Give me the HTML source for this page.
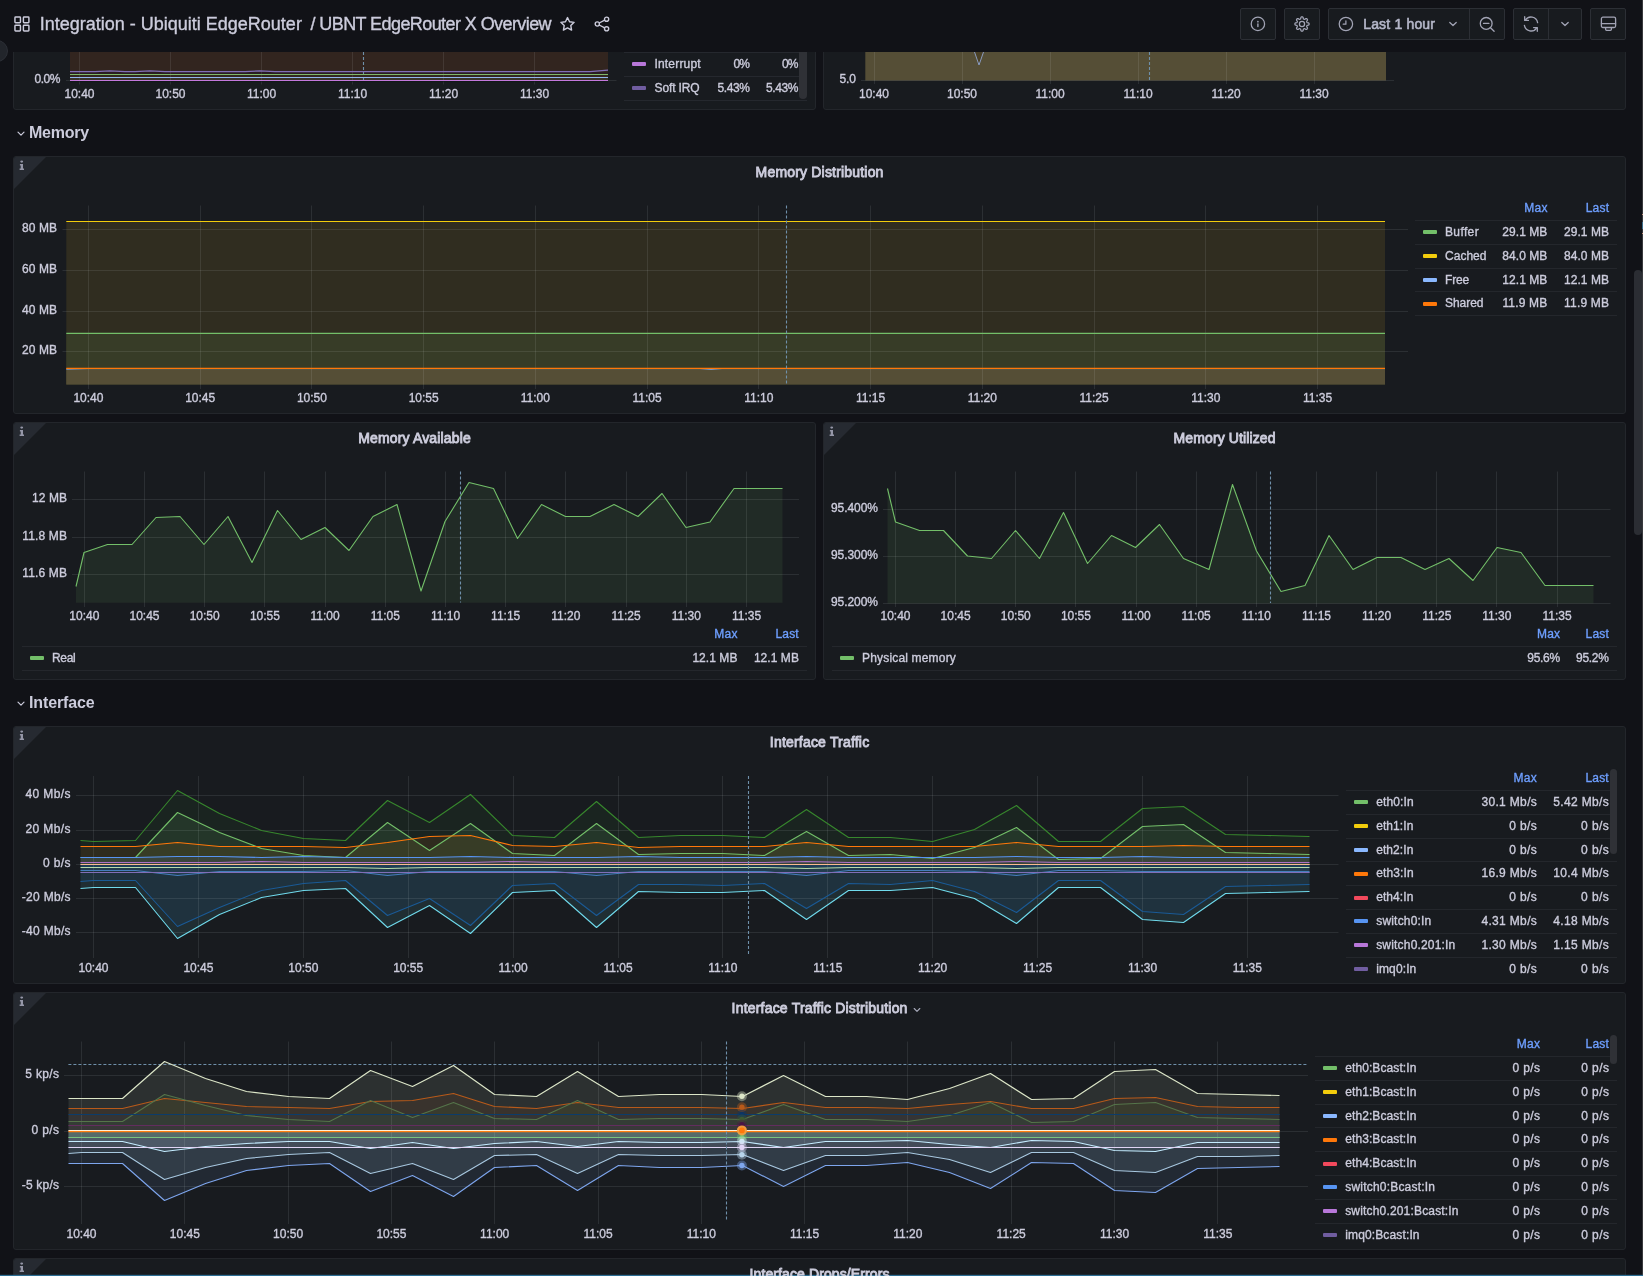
<!DOCTYPE html>
<html><head><meta charset="utf-8"><title>UBNT EdgeRouter X Overview</title>
<style>
html,body{margin:0;padding:0}
body{width:1643px;height:1276px;overflow:hidden;background:#111217;position:relative;font-family:'Liberation Sans',sans-serif;color:#ccccdc;-webkit-text-stroke:0.35px}
svg{position:absolute;overflow:visible}
</style></head><body>
<div style="position:absolute;left:13px;top:20px;width:801px;height:88px;background:#181b1f;border:1px solid #23262b;border-radius:3px;overflow:hidden">
</div>
<div style="position:absolute;left:823px;top:20px;width:801px;height:88px;background:#181b1f;border:1px solid #23262b;border-radius:3px;overflow:hidden">
</div>
<svg style="left:13px;top:52px" width="803" height="58" viewBox="13 52 803 58">
<rect x="70" y="52" width="538" height="29" fill="#32251f"/>
<rect x="70" y="72" width="538" height="2" fill="#2a1d20"/>
<rect x="70" y="75" width="538" height="2" fill="#33281f"/>
<rect x="70" y="78" width="538" height="2" fill="#3a3428"/>
<line x1="79.5" y1="52" x2="79.5" y2="84.5" stroke="rgba(240,250,255,0.09)" stroke-width="1"/>
<line x1="170.5" y1="52" x2="170.5" y2="84.5" stroke="rgba(240,250,255,0.09)" stroke-width="1"/>
<line x1="261.5" y1="52" x2="261.5" y2="84.5" stroke="rgba(240,250,255,0.09)" stroke-width="1"/>
<line x1="352.5" y1="52" x2="352.5" y2="84.5" stroke="rgba(240,250,255,0.09)" stroke-width="1"/>
<line x1="443.5" y1="52" x2="443.5" y2="84.5" stroke="rgba(240,250,255,0.09)" stroke-width="1"/>
<line x1="534.5" y1="52" x2="534.5" y2="84.5" stroke="rgba(240,250,255,0.09)" stroke-width="1"/>
<line x1="66" y1="80.5" x2="70" y2="80.5" stroke="rgba(240,250,255,0.09)" stroke-width="1"/>
<line x1="608" y1="80.5" x2="616.5" y2="80.5" stroke="rgba(240,250,255,0.09)" stroke-width="1"/>
<line x1="363.5" y1="52" x2="363.5" y2="80" stroke="#6f90aa" stroke-width="1.1" stroke-dasharray="3 2"/>
<polyline points="70,71.5 95,71.500 110,71 125,71.500 135,71.500 150,71 165,71.500 245,71.500 260,71 275,71.500 590,71.500 608,70.200" fill="none" stroke="#806eb7" stroke-width="1.25"/>
<line x1="70" y1="74.5" x2="608" y2="74.5" stroke="#7eb86a" stroke-width="1.15"/>
<line x1="70" y1="77.5" x2="608" y2="77.5" stroke="#92b4ee" stroke-width="1.1"/>
<line x1="70" y1="80.5" x2="608" y2="80.5" stroke="#c378dc" stroke-width="1.15"/>
<line x1="70" y1="81.6" x2="608" y2="81.6" stroke="#0e1515" stroke-width="0.7"/>
</svg>
<div style="position:absolute;left:624px;top:52px;width:183px;height:1px;background:#25282e"></div>
<div style="position:absolute;left:624px;top:76px;width:183px;height:1px;background:#25282e"></div>
<div style="position:absolute;left:624px;top:100px;width:183px;height:1px;background:#25282e"></div>
<div style="position:absolute;left:632px;top:62px;width:14px;height:4px;background:#b877d9;border-radius:1px"></div>
<div style="position:absolute;left:632px;top:86px;width:14px;height:4px;background:#705da0;border-radius:1px"></div>
<div style="position:absolute;left:799px;top:52px;width:7.5px;height:46.5px;background:#2f3136;border-radius:0 0 4px 4px"></div>
<svg style="left:823px;top:52px" width="803" height="58" viewBox="823 52 803 58">
<rect x="865.3" y="52" width="520.7" height="28.5" fill="#554e36"/>
<polygon points="974.5,52 979,65 983.5,52" fill="#4a4026"/>
<line x1="874.5" y1="52" x2="874.5" y2="84" stroke="rgba(240,250,255,0.09)" stroke-width="1"/>
<line x1="962.5" y1="52" x2="962.5" y2="84" stroke="rgba(240,250,255,0.09)" stroke-width="1"/>
<line x1="1050.5" y1="52" x2="1050.5" y2="84" stroke="rgba(240,250,255,0.09)" stroke-width="1"/>
<line x1="1138.5" y1="52" x2="1138.5" y2="84" stroke="rgba(240,250,255,0.09)" stroke-width="1"/>
<line x1="1226.5" y1="52" x2="1226.5" y2="84" stroke="rgba(240,250,255,0.09)" stroke-width="1"/>
<line x1="1314.5" y1="52" x2="1314.5" y2="84" stroke="rgba(240,250,255,0.09)" stroke-width="1"/>
<line x1="861" y1="80.5" x2="1394" y2="80.5" stroke="rgba(240,250,255,0.09)" stroke-width="1"/>
<line x1="1149.5" y1="52" x2="1149.5" y2="80" stroke="#6f90aa" stroke-width="1.1" stroke-dasharray="3 2"/>
<polyline points="974.5,52 979,65 983.5,52" fill="none" stroke="#8a9bc0" stroke-width="1"/>
</svg>
<div style="position:absolute;left:0px;top:0px;width:1643px;height:52px;background:#111217"></div>
<div style="position:absolute;left:-16px;top:40px;width:24px;height:22px;background:#22252b;border-radius:12px;box-sizing:border-box;border:1px solid #2c2f36"></div>
<svg style="left:14px;top:15.800px" width="16" height="16" viewBox="0 0 16 16" fill="none" stroke="#ccccdc" stroke-width="1.45"><rect x="0.950" y="0.950" width="5.500" height="5.700" rx="0.700"/><rect x="9.400" y="0.950" width="5.500" height="5.700" rx="0.700"/><rect x="0.950" y="9.250" width="5.500" height="5.700" rx="0.700"/><rect x="9.400" y="9.250" width="5.500" height="5.700" rx="0.700"/></svg>
<svg style="left:559.200px;top:16px" width="17" height="17" viewBox="0 0 24 24" fill="none" stroke="#ccccdc" stroke-width="2" stroke-linejoin="round"><polygon points="12.00,2.20 14.88,8.04 21.32,8.97 16.66,13.51 17.76,19.93 12.00,16.90 6.24,19.93 7.34,13.51 2.68,8.97 9.12,8.04"/></svg>
<svg style="left:594px;top:16px" width="16" height="16" viewBox="0 0 16 16" fill="none" stroke="#ccccdc" stroke-width="1.4"><circle cx="12.6" cy="3.2" r="2.1"/><circle cx="3.3" cy="8" r="2.1"/><circle cx="12.6" cy="12.8" r="2.1"/><path d="M5.2 7l5.5-2.900M5.200 9l5.500 2.900"/></svg>
<div style="position:absolute;left:1240px;top:8px;width:36px;height:32px;background:#181b1f;border:1px solid #2c2f35;border-radius:2px;box-sizing:border-box"></div>
<div style="position:absolute;left:1284px;top:8px;width:36px;height:32px;background:#181b1f;border:1px solid #2c2f35;border-radius:2px;box-sizing:border-box"></div>
<div style="position:absolute;left:1328px;top:8px;width:177px;height:32px;background:#181b1f;border:1px solid #2c2f35;border-radius:2px;box-sizing:border-box"></div>
<div style="position:absolute;left:1469px;top:8px;width:1px;height:32px;background:#2c2f35"></div>
<div style="position:absolute;left:1513px;top:8px;width:69px;height:32px;background:#181b1f;border:1px solid #2c2f35;border-radius:2px;box-sizing:border-box"></div>
<div style="position:absolute;left:1548px;top:8px;width:1px;height:32px;background:#2c2f35"></div>
<div style="position:absolute;left:1590px;top:8px;width:36px;height:32px;background:#181b1f;border:1px solid #2c2f35;border-radius:2px;box-sizing:border-box"></div>
<svg style="left:1250px;top:16px" width="16" height="16" viewBox="0 0 16 16" fill="none" stroke="#a2a4b5" stroke-width="1.25"><circle cx="7.900" cy="7.900" r="6.700"/><path d="M7.900 8v2.600" stroke-linecap="round" stroke-width="1.4"/><circle cx="7.900" cy="5.700" r="0.850" fill="#a2a4b5" stroke="none"/></svg>
<svg style="left:1294px;top:16px" width="16" height="16" viewBox="0 0 16 16" fill="none" stroke="#a2a4b5" stroke-width="1.25" stroke-linejoin="round"><circle cx="8" cy="8" r="2.600"/><polygon points="8.00,0.90 8.28,0.91 8.55,0.95 8.82,1.06 9.05,1.36 9.20,1.97 9.30,2.58 9.44,2.89 9.62,3.03 9.80,3.12 9.99,3.20 10.18,3.27 10.37,3.34 10.60,3.36 10.91,3.25 11.42,2.89 11.95,2.56 12.33,2.51 12.59,2.62 12.82,2.79 13.02,2.98 13.21,3.18 13.38,3.41 13.49,3.67 13.44,4.05 13.11,4.58 12.75,5.09 12.64,5.40 12.66,5.63 12.73,5.82 12.80,6.01 12.88,6.20 12.97,6.38 13.11,6.56 13.42,6.70 14.03,6.80 14.64,6.95 14.94,7.18 15.05,7.45 15.09,7.72 15.10,8.00 15.09,8.28 15.05,8.55 14.94,8.82 14.64,9.05 14.03,9.20 13.42,9.30 13.11,9.44 12.97,9.62 12.88,9.80 12.80,9.99 12.73,10.18 12.66,10.37 12.64,10.60 12.75,10.91 13.11,11.42 13.44,11.95 13.49,12.33 13.38,12.59 13.21,12.82 13.02,13.02 12.82,13.21 12.59,13.38 12.33,13.49 11.95,13.44 11.42,13.11 10.91,12.75 10.60,12.64 10.37,12.66 10.18,12.73 9.99,12.80 9.80,12.88 9.62,12.97 9.44,13.11 9.30,13.42 9.20,14.03 9.05,14.64 8.82,14.94 8.55,15.05 8.28,15.09 8.00,15.10 7.72,15.09 7.45,15.05 7.18,14.94 6.95,14.64 6.80,14.03 6.70,13.42 6.56,13.11 6.38,12.97 6.20,12.88 6.01,12.80 5.82,12.73 5.63,12.66 5.40,12.64 5.09,12.75 4.58,13.11 4.05,13.44 3.67,13.49 3.41,13.38 3.18,13.21 2.98,13.02 2.79,12.82 2.62,12.59 2.51,12.33 2.56,11.95 2.89,11.42 3.25,10.91 3.36,10.60 3.34,10.37 3.27,10.18 3.20,9.99 3.12,9.80 3.03,9.62 2.89,9.44 2.58,9.30 1.97,9.20 1.36,9.05 1.06,8.82 0.95,8.55 0.91,8.28 0.90,8.00 0.91,7.72 0.95,7.45 1.06,7.18 1.36,6.95 1.97,6.80 2.58,6.70 2.89,6.56 3.03,6.38 3.12,6.20 3.20,6.01 3.27,5.82 3.34,5.63 3.36,5.40 3.25,5.09 2.89,4.58 2.56,4.05 2.51,3.67 2.62,3.41 2.79,3.18 2.98,2.98 3.18,2.79 3.41,2.62 3.67,2.51 4.05,2.56 4.58,2.89 5.09,3.25 5.40,3.36 5.63,3.34 5.82,3.27 6.01,3.20 6.20,3.12 6.38,3.03 6.56,2.89 6.70,2.58 6.80,1.97 6.95,1.36 7.18,1.06 7.45,0.95 7.72,0.91"/></svg>
<svg style="left:1338px;top:16px" width="16" height="16" viewBox="0 0 16 16" fill="none" stroke="#a2a4b5" stroke-width="1.25"><circle cx="7.900" cy="8" r="6.700"/><path d="M7.900 4.800v3.400H5.200" stroke-linecap="round" stroke-linejoin="round"/></svg>
<svg style="left:1448px;top:20px" width="10" height="8" viewBox="0 0 10 8" fill="none" stroke="#a2a4b5" stroke-width="1.3"><path d="M1.800 2.500L5 5.500l3.200-3" stroke-linecap="round" stroke-linejoin="round"/></svg>
<svg style="left:1478px;top:15px" width="18" height="18" viewBox="0 0 18 18" fill="none" stroke="#a2a4b5" stroke-width="1.3"><circle cx="8.200" cy="8.400" r="5.900"/><path d="M5.500 8.400h5.400M12.500 12.700l3.600 3.600" stroke-linecap="round"/></svg>
<svg style="left:1522px;top:15px" width="18" height="18" viewBox="0 0 18 18" fill="none" stroke="#a2a4b5" stroke-width="1.3" stroke-linecap="round" stroke-linejoin="round"><path d="M15.600 7.600A6.700 6.700 0 0 0 3.300 5.200M2.400 10.400a6.700 6.700 0 0 0 12.300 2.400"/><path d="M2.700 1.700v3.700h3.700M15.300 16.300v-3.700h-3.700"/></svg>
<svg style="left:1560px;top:20px" width="10" height="8" viewBox="0 0 10 8" fill="none" stroke="#a2a4b5" stroke-width="1.3"><path d="M1.800 2.500L5 5.500l3.200-3" stroke-linecap="round" stroke-linejoin="round"/></svg>
<svg style="left:1600px;top:15px" width="17" height="17" viewBox="0 0 17 17" fill="none" stroke="#a2a4b5" stroke-width="1.3" stroke-linejoin="round"><rect x="1.400" y="2.200" width="14.200" height="10.300" rx="1.500"/><path d="M1.400 8.700h14.200M5.600 12.600v1.700q0 1 1 1h3.800q1 0 1-1v-1.700" stroke-linecap="round"/></svg>
<div style="position:absolute;left:1634px;top:270px;width:8px;height:265px;background:#2b2d33;border-radius:4px"></div>
<svg style="left:16.5px;top:130.5px" width="8" height="6" viewBox="0 0 8 6" fill="none" stroke="#ccccdc" stroke-width="1.2"><path d="M1 1.200l3 3 3-3" stroke-linecap="round" stroke-linejoin="round"/></svg>
<svg style="left:16.5px;top:700.5px" width="8" height="6" viewBox="0 0 8 6" fill="none" stroke="#ccccdc" stroke-width="1.2"><path d="M1 1.200l3 3 3-3" stroke-linecap="round" stroke-linejoin="round"/></svg>
<div style="position:absolute;left:13px;top:156px;width:1611px;height:256px;background:#181b1f;border:1px solid #23262b;border-radius:3px;overflow:hidden">
<div style="position:absolute;left:0;top:0;width:0;height:0;border-top:32px solid #262a31;border-right:32px solid transparent"></div>
<svg style="left:4.700px;top:3.400px" width="6" height="11" viewBox="0 0 6 11" fill="#9496a7"><ellipse cx="2.700" cy="1.600" rx="1.450" ry="1.100"/><path d="M0.900 4h3.100v4.600h1v1.400H0.600V8.600h1.100V5.400H0.900z"/></svg>
</div>
<div style="position:absolute;left:13px;top:422px;width:801px;height:256px;background:#181b1f;border:1px solid #23262b;border-radius:3px;overflow:hidden">
<div style="position:absolute;left:0;top:0;width:0;height:0;border-top:32px solid #262a31;border-right:32px solid transparent"></div>
<svg style="left:4.700px;top:3.400px" width="6" height="11" viewBox="0 0 6 11" fill="#9496a7"><ellipse cx="2.700" cy="1.600" rx="1.450" ry="1.100"/><path d="M0.900 4h3.100v4.600h1v1.400H0.600V8.600h1.100V5.400H0.900z"/></svg>
</div>
<div style="position:absolute;left:823px;top:422px;width:801px;height:256px;background:#181b1f;border:1px solid #23262b;border-radius:3px;overflow:hidden">
<div style="position:absolute;left:0;top:0;width:0;height:0;border-top:32px solid #262a31;border-right:32px solid transparent"></div>
<svg style="left:4.700px;top:3.400px" width="6" height="11" viewBox="0 0 6 11" fill="#9496a7"><ellipse cx="2.700" cy="1.600" rx="1.450" ry="1.100"/><path d="M0.900 4h3.100v4.600h1v1.400H0.600V8.600h1.100V5.400H0.900z"/></svg>
</div>
<div style="position:absolute;left:13px;top:726px;width:1611px;height:256px;background:#181b1f;border:1px solid #23262b;border-radius:3px;overflow:hidden">
<div style="position:absolute;left:0;top:0;width:0;height:0;border-top:32px solid #262a31;border-right:32px solid transparent"></div>
<svg style="left:4.700px;top:3.400px" width="6" height="11" viewBox="0 0 6 11" fill="#9496a7"><ellipse cx="2.700" cy="1.600" rx="1.450" ry="1.100"/><path d="M0.900 4h3.100v4.600h1v1.400H0.600V8.600h1.100V5.400H0.900z"/></svg>
</div>
<div style="position:absolute;left:13px;top:992px;width:1611px;height:256px;background:#181b1f;border:1px solid #23262b;border-radius:3px;overflow:hidden">
<div style="position:absolute;left:0;top:0;width:0;height:0;border-top:32px solid #262a31;border-right:32px solid transparent"></div>
<svg style="left:4.700px;top:3.400px" width="6" height="11" viewBox="0 0 6 11" fill="#9496a7"><ellipse cx="2.700" cy="1.600" rx="1.450" ry="1.100"/><path d="M0.900 4h3.100v4.600h1v1.400H0.600V8.600h1.100V5.400H0.900z"/></svg>
</div>
<div style="position:absolute;left:13px;top:1258px;width:1611px;height:58px;background:#181b1f;border:1px solid #23262b;border-radius:3px;overflow:hidden">
<div style="position:absolute;left:0;top:0;width:0;height:0;border-top:32px solid #262a31;border-right:32px solid transparent"></div>
<svg style="left:4.700px;top:3.400px" width="6" height="11" viewBox="0 0 6 11" fill="#9496a7"><ellipse cx="2.700" cy="1.600" rx="1.450" ry="1.100"/><path d="M0.900 4h3.100v4.600h1v1.400H0.600V8.600h1.100V5.400H0.900z"/></svg>
</div>
<svg style="left:913px;top:1007px" width="8" height="6" viewBox="0 0 8 6" fill="none" stroke="#a8aabb" stroke-width="1.1"><path d="M1.200 1.500l2.800 2.800 2.800-2.800" stroke-linecap="round" stroke-linejoin="round"/></svg>
<svg style="left:13px;top:200px" width="1400" height="200" viewBox="13 200 1400 200">
<rect x="66.3" y="221.5" width="1318.7" height="163" fill="#302d20"/>
<rect x="66.3" y="333.4" width="1318.7" height="51.1" fill="#373c27"/>
<rect x="66.3" y="368.3" width="1318.7" height="16.2" fill="#554e36"/>
<line x1="88.5" y1="205.5" x2="88.5" y2="389" stroke="rgba(240,250,255,0.09)" stroke-width="1"/>
<line x1="200.5" y1="205.5" x2="200.5" y2="389" stroke="rgba(240,250,255,0.09)" stroke-width="1"/>
<line x1="311.5" y1="205.5" x2="311.5" y2="389" stroke="rgba(240,250,255,0.09)" stroke-width="1"/>
<line x1="423.5" y1="205.5" x2="423.5" y2="389" stroke="rgba(240,250,255,0.09)" stroke-width="1"/>
<line x1="535.5" y1="205.5" x2="535.5" y2="389" stroke="rgba(240,250,255,0.09)" stroke-width="1"/>
<line x1="647.5" y1="205.5" x2="647.5" y2="389" stroke="rgba(240,250,255,0.09)" stroke-width="1"/>
<line x1="758.5" y1="205.5" x2="758.5" y2="389" stroke="rgba(240,250,255,0.09)" stroke-width="1"/>
<line x1="870.5" y1="205.5" x2="870.5" y2="389" stroke="rgba(240,250,255,0.09)" stroke-width="1"/>
<line x1="982.5" y1="205.5" x2="982.5" y2="389" stroke="rgba(240,250,255,0.09)" stroke-width="1"/>
<line x1="1094.5" y1="205.5" x2="1094.5" y2="389" stroke="rgba(240,250,255,0.09)" stroke-width="1"/>
<line x1="1205.5" y1="205.5" x2="1205.5" y2="389" stroke="rgba(240,250,255,0.09)" stroke-width="1"/>
<line x1="1317.5" y1="205.5" x2="1317.5" y2="389" stroke="rgba(240,250,255,0.09)" stroke-width="1"/>
<line x1="62.5" y1="229.5" x2="1408" y2="229.5" stroke="rgba(240,250,255,0.09)" stroke-width="1"/>
<line x1="62.5" y1="270.5" x2="1408" y2="270.5" stroke="rgba(240,250,255,0.09)" stroke-width="1"/>
<line x1="62.5" y1="311.5" x2="1408" y2="311.5" stroke="rgba(240,250,255,0.09)" stroke-width="1"/>
<line x1="62.5" y1="351.5" x2="1408" y2="351.5" stroke="rgba(240,250,255,0.09)" stroke-width="1"/>
<line x1="66.3" y1="221.5" x2="1385" y2="221.5" stroke="#f2cc0c" stroke-width="1.2"/>
<line x1="66.3" y1="333.4" x2="1385" y2="333.4" stroke="#73bf69" stroke-width="1.2"/>
<polyline points="66.3,369.2 88,368.6 700,368.6 711,369.400 722,368.600 1385,368.600" fill="none" stroke="#8ab8ff" stroke-width="1" stroke-opacity="0.8"/>
<line x1="66.3" y1="368.3" x2="1385" y2="368.3" stroke="#ff780a" stroke-width="1.2"/>
<line x1="786.5" y1="205.5" x2="786.5" y2="384.5" stroke="#6f90aa" stroke-width="1.1" stroke-dasharray="3 2"/>
</svg>
<div style="position:absolute;left:1423px;top:230px;width:14px;height:4px;background:#73bf69;border-radius:1px"></div>
<div style="position:absolute;left:1423px;top:254px;width:14px;height:4px;background:#f2cc0c;border-radius:1px"></div>
<div style="position:absolute;left:1423px;top:278px;width:14px;height:4px;background:#8ab8ff;border-radius:1px"></div>
<div style="position:absolute;left:1423px;top:302px;width:14px;height:4px;background:#ff780a;border-radius:1px"></div>
<div style="position:absolute;left:1415px;top:220px;width:202px;height:1px;background:#24272c"></div>
<div style="position:absolute;left:1415px;top:244px;width:202px;height:1px;background:#24272c"></div>
<div style="position:absolute;left:1415px;top:268px;width:202px;height:1px;background:#24272c"></div>
<div style="position:absolute;left:1415px;top:291px;width:202px;height:1px;background:#24272c"></div>
<div style="position:absolute;left:1415px;top:315px;width:202px;height:1px;background:#24272c"></div>
<svg style="left:13px;top:465px" width="803" height="145" viewBox="13 465 803 145">
<polygon points="76.0,586.5 84.0,552.5 107.5,544.5 132.0,544.5 156.0,517.5 180.0,516.5 204.0,544.5 228.0,516.5 252.0,562.5 277.5,510.5 301.0,539.5 325.0,527.5 349.0,550.5 373.0,516.5 397.0,504.5 421.0,591.0 445.0,521.5 469.0,482.5 493.5,488.5 517.5,538.5 541.5,504.5 565.5,516.5 590.0,516.5 614.0,504.5 638.0,516.5 662.0,493.5 686.0,527.5 710.0,522.0 734.0,488.5 758.5,488.5 782.5,488.5 782.5,602.8 76.0,602.8" fill="#73bf69" fill-opacity="0.1" stroke="none"/>
<line x1="84.5" y1="471.5" x2="84.5" y2="607" stroke="rgba(240,250,255,0.09)" stroke-width="1"/>
<line x1="144.5" y1="471.5" x2="144.5" y2="607" stroke="rgba(240,250,255,0.09)" stroke-width="1"/>
<line x1="204.5" y1="471.5" x2="204.5" y2="607" stroke="rgba(240,250,255,0.09)" stroke-width="1"/>
<line x1="264.5" y1="471.5" x2="264.5" y2="607" stroke="rgba(240,250,255,0.09)" stroke-width="1"/>
<line x1="325.5" y1="471.5" x2="325.5" y2="607" stroke="rgba(240,250,255,0.09)" stroke-width="1"/>
<line x1="385.5" y1="471.5" x2="385.5" y2="607" stroke="rgba(240,250,255,0.09)" stroke-width="1"/>
<line x1="445.5" y1="471.5" x2="445.5" y2="607" stroke="rgba(240,250,255,0.09)" stroke-width="1"/>
<line x1="505.5" y1="471.5" x2="505.5" y2="607" stroke="rgba(240,250,255,0.09)" stroke-width="1"/>
<line x1="565.5" y1="471.5" x2="565.5" y2="607" stroke="rgba(240,250,255,0.09)" stroke-width="1"/>
<line x1="626.5" y1="471.5" x2="626.5" y2="607" stroke="rgba(240,250,255,0.09)" stroke-width="1"/>
<line x1="686.5" y1="471.5" x2="686.5" y2="607" stroke="rgba(240,250,255,0.09)" stroke-width="1"/>
<line x1="746.5" y1="471.5" x2="746.5" y2="607" stroke="rgba(240,250,255,0.09)" stroke-width="1"/>
<line x1="72" y1="499.5" x2="799" y2="499.5" stroke="rgba(240,250,255,0.09)" stroke-width="1"/>
<line x1="72" y1="537.5" x2="799" y2="537.5" stroke="rgba(240,250,255,0.09)" stroke-width="1"/>
<line x1="72" y1="574.5" x2="799" y2="574.5" stroke="rgba(240,250,255,0.09)" stroke-width="1"/>
<polyline points="76.0,586.5 84.0,552.5 107.5,544.5 132.0,544.5 156.0,517.5 180.0,516.5 204.0,544.5 228.0,516.5 252.0,562.5 277.5,510.5 301.0,539.5 325.0,527.5 349.0,550.5 373.0,516.5 397.0,504.5 421.0,591.0 445.0,521.5 469.0,482.5 493.5,488.5 517.5,538.5 541.5,504.5 565.5,516.5 590.0,516.5 614.0,504.5 638.0,516.5 662.0,493.5 686.0,527.5 710.0,522.0 734.0,488.5 758.5,488.5 782.5,488.5" fill="none" stroke="#73bf69" stroke-width="1.1" stroke-linejoin="round" stroke-opacity="1"/>
<line x1="460.5" y1="471.5" x2="460.5" y2="602.5" stroke="#6f90aa" stroke-width="1.1" stroke-dasharray="3 2"/>
</svg>
<div style="position:absolute;left:30px;top:656px;width:14px;height:4px;background:#73bf69;border-radius:1px"></div>
<div style="position:absolute;left:22px;top:646px;width:785px;height:1px;background:#24272c"></div>
<div style="position:absolute;left:22px;top:670px;width:785px;height:1px;background:#24272c"></div>
<svg style="left:823px;top:465px" width="803" height="145" viewBox="823 465 803 145">
<polygon points="887.5,488.5 895.5,522.0 919.5,530.5 943.5,530.5 967.5,556.0 991.5,558.5 1015.5,530.5 1039.5,558.5 1063.5,512.5 1087.5,563.5 1111.5,535.5 1135.5,547.5 1159.5,524.5 1183.5,558.5 1209.0,569.5 1232.5,484.5 1256.5,551.0 1281.0,591.5 1305.0,585.5 1329.0,535.5 1353.0,569.5 1377.0,557.5 1401.0,557.5 1425.0,569.5 1449.0,558.5 1473.0,580.5 1497.0,547.5 1521.0,552.5 1545.0,585.5 1569.5,585.5 1593.5,585.5 1593.5,603.5 887.5,603.5" fill="#73bf69" fill-opacity="0.1" stroke="none"/>
<line x1="895.5" y1="471.5" x2="895.5" y2="607" stroke="rgba(240,250,255,0.09)" stroke-width="1"/>
<line x1="955.5" y1="471.5" x2="955.5" y2="607" stroke="rgba(240,250,255,0.09)" stroke-width="1"/>
<line x1="1015.5" y1="471.5" x2="1015.5" y2="607" stroke="rgba(240,250,255,0.09)" stroke-width="1"/>
<line x1="1075.5" y1="471.5" x2="1075.5" y2="607" stroke="rgba(240,250,255,0.09)" stroke-width="1"/>
<line x1="1136.5" y1="471.5" x2="1136.5" y2="607" stroke="rgba(240,250,255,0.09)" stroke-width="1"/>
<line x1="1196.5" y1="471.5" x2="1196.5" y2="607" stroke="rgba(240,250,255,0.09)" stroke-width="1"/>
<line x1="1256.5" y1="471.5" x2="1256.5" y2="607" stroke="rgba(240,250,255,0.09)" stroke-width="1"/>
<line x1="1316.5" y1="471.5" x2="1316.5" y2="607" stroke="rgba(240,250,255,0.09)" stroke-width="1"/>
<line x1="1376.5" y1="471.5" x2="1376.5" y2="607" stroke="rgba(240,250,255,0.09)" stroke-width="1"/>
<line x1="1436.5" y1="471.5" x2="1436.5" y2="607" stroke="rgba(240,250,255,0.09)" stroke-width="1"/>
<line x1="1496.5" y1="471.5" x2="1496.5" y2="607" stroke="rgba(240,250,255,0.09)" stroke-width="1"/>
<line x1="1557.5" y1="471.5" x2="1557.5" y2="607" stroke="rgba(240,250,255,0.09)" stroke-width="1"/>
<line x1="883" y1="509.5" x2="1610.5" y2="509.5" stroke="rgba(240,250,255,0.09)" stroke-width="1"/>
<line x1="883" y1="556.5" x2="1610.5" y2="556.5" stroke="rgba(240,250,255,0.09)" stroke-width="1"/>
<line x1="883" y1="603.5" x2="1610.5" y2="603.5" stroke="rgba(240,250,255,0.09)" stroke-width="1"/>
<polyline points="887.5,488.5 895.5,522.0 919.5,530.5 943.5,530.5 967.5,556.0 991.5,558.5 1015.5,530.5 1039.5,558.5 1063.5,512.5 1087.5,563.5 1111.5,535.5 1135.5,547.5 1159.5,524.5 1183.5,558.5 1209.0,569.5 1232.5,484.5 1256.5,551.0 1281.0,591.5 1305.0,585.5 1329.0,535.5 1353.0,569.5 1377.0,557.5 1401.0,557.5 1425.0,569.5 1449.0,558.5 1473.0,580.5 1497.0,547.5 1521.0,552.5 1545.0,585.5 1569.5,585.5 1593.5,585.5" fill="none" stroke="#73bf69" stroke-width="1.1" stroke-linejoin="round" stroke-opacity="1"/>
<line x1="1270.5" y1="471.5" x2="1270.5" y2="603" stroke="#6f90aa" stroke-width="1.1" stroke-dasharray="3 2"/>
</svg>
<div style="position:absolute;left:840px;top:656px;width:14px;height:4px;background:#73bf69;border-radius:1px"></div>
<div style="position:absolute;left:832px;top:646px;width:785px;height:1px;background:#24272c"></div>
<div style="position:absolute;left:832px;top:670px;width:785px;height:1px;background:#24272c"></div>
<svg style="left:13px;top:770px" width="1330" height="190" viewBox="13 770 1330 190">
<polygon points="80.5,840.5 93.5,841.5 135.5,840.5 177.5,790.5 219.5,813.5 261.5,830.5 303.5,838.5 345.5,840.5 387.5,800.5 429.5,822.5 470.5,794.5 512.5,835.5 554.5,837.5 596.5,801.5 638.5,837.5 680.5,835.5 722.5,835.5 764.5,837.5 806.5,809.5 848.5,837.5 890.5,837.5 932.5,841.5 974.5,829.5 1016.5,805.5 1058.5,841.5 1100.5,841.5 1142.5,808.5 1183.5,806.5 1225.5,834.5 1267.5,835.5 1309.5,836.5 1309.5,864.5 80.5,864.5" fill="#37872d" fill-opacity="0.09" stroke="none"/>
<polygon points="80.5,857.5 93.5,857.5 135.5,857.5 177.5,812.5 219.5,832.5 261.5,848.5 303.5,855.5 345.5,857.5 387.5,822.5 429.5,850.5 470.5,823.5 512.5,853.5 554.5,855.5 596.5,823.5 638.5,854.5 680.5,853.5 722.5,853.5 764.5,855.5 806.5,831.5 848.5,855.5 890.5,854.5 932.5,858.5 974.5,847.5 1016.5,827.5 1058.5,859.5 1100.5,858.5 1142.5,826.5 1183.5,824.5 1225.5,852.5 1267.5,853.5 1309.5,854.5 1309.5,864.5 80.5,864.5" fill="#73bf69" fill-opacity="0.12" stroke="none"/>
<polygon points="80.5,846.5 93.5,846.5 135.5,846.5 177.5,842.5 219.5,846.5 261.5,846.5 303.5,846.5 345.5,847.5 387.5,842.5 429.5,836.5 470.5,835.5 512.5,845.5 554.5,846.5 596.5,842.5 638.5,847.5 680.5,846.5 722.5,846.5 764.5,846.5 806.5,842.5 848.5,846.5 890.5,846.5 932.5,846.5 974.5,846.5 1016.5,842.5 1058.5,846.5 1100.5,846.5 1142.5,846.5 1183.5,845.5 1225.5,846.5 1267.5,846.5 1309.5,846.5 1309.5,864.5 80.5,864.5" fill="#ff780a" fill-opacity="0.09" stroke="none"/>
<polygon points="80.5,857.5 93.5,857.5 135.5,857.5 177.5,856.5 219.5,856.5 261.5,857.5 303.5,856.5 345.5,857.5 387.5,857.5 429.5,857.5 470.5,856.5 512.5,857.5 554.5,857.5 596.5,857.5 638.5,856.5 680.5,857.5 722.5,857.5 764.5,857.5 806.5,856.5 848.5,857.5 890.5,857.5 932.5,857.5 974.5,857.5 1016.5,856.5 1058.5,857.5 1100.5,857.5 1142.5,856.5 1183.5,857.5 1225.5,857.5 1267.5,857.5 1309.5,857.5 1309.5,864.5 80.5,864.5" fill="#5794f2" fill-opacity="0.1" stroke="none"/>
<polygon points="80.5,888.5 93.5,887.5 135.5,887.5 177.5,938.5 219.5,914.5 261.5,897.5 303.5,890.5 345.5,888.5 387.5,927.5 429.5,905.5 470.5,933.5 512.5,892.5 554.5,890.5 596.5,927.5 638.5,891.5 680.5,892.5 722.5,892.5 764.5,890.5 806.5,919.5 848.5,890.5 890.5,890.5 932.5,887.5 974.5,898.5 1016.5,923.5 1058.5,887.5 1100.5,887.5 1142.5,919.5 1183.5,922.5 1225.5,893.5 1267.5,892.5 1309.5,891.5 1309.5,864.5 80.5,864.5" fill="#70dbed" fill-opacity="0.1" stroke="none"/>
<polygon points="80.5,881.5 93.5,880.5 135.5,880.5 177.5,926.5 219.5,907.5 261.5,890.5 303.5,883.5 345.5,880.5 387.5,915.5 429.5,898.5 470.5,925.5 512.5,885.5 554.5,883.5 596.5,915.5 638.5,884.5 680.5,884.5 722.5,885.5 764.5,883.5 806.5,908.5 848.5,883.5 890.5,884.5 932.5,880.5 974.5,891.5 1016.5,912.5 1058.5,880.5 1100.5,880.5 1142.5,911.5 1183.5,914.5 1225.5,886.5 1267.5,885.5 1309.5,884.5 1309.5,864.5 80.5,864.5" fill="#1f60c4" fill-opacity="0.08" stroke="none"/>
<polygon points="80.5,870.5 93.5,870.5 135.5,870.5 177.5,875.5 219.5,871.5 261.5,871.5 303.5,871.5 345.5,870.5 387.5,875.5 429.5,871.5 470.5,871.5 512.5,871.5 554.5,871.5 596.5,875.5 638.5,871.5 680.5,871.5 722.5,871.5 764.5,871.5 806.5,875.5 848.5,870.5 890.5,870.5 932.5,870.5 974.5,871.5 1016.5,875.5 1058.5,870.5 1100.5,870.5 1142.5,871.5 1183.5,871.5 1225.5,871.5 1267.5,871.5 1309.5,871.5 1309.5,864.5 80.5,864.5" fill="#447ebc" fill-opacity="0.135" stroke="none"/>
<rect x="80.4" y="864.5" width="1229.3" height="3" fill="#0a437c" fill-opacity="0.2"/>
<line x1="93.5" y1="776" x2="93.5" y2="958" stroke="rgba(240,250,255,0.09)" stroke-width="1"/>
<line x1="198.5" y1="776" x2="198.5" y2="958" stroke="rgba(240,250,255,0.09)" stroke-width="1"/>
<line x1="303.5" y1="776" x2="303.5" y2="958" stroke="rgba(240,250,255,0.09)" stroke-width="1"/>
<line x1="408.5" y1="776" x2="408.5" y2="958" stroke="rgba(240,250,255,0.09)" stroke-width="1"/>
<line x1="513.5" y1="776" x2="513.5" y2="958" stroke="rgba(240,250,255,0.09)" stroke-width="1"/>
<line x1="618.5" y1="776" x2="618.5" y2="958" stroke="rgba(240,250,255,0.09)" stroke-width="1"/>
<line x1="722.5" y1="776" x2="722.5" y2="958" stroke="rgba(240,250,255,0.09)" stroke-width="1"/>
<line x1="827.5" y1="776" x2="827.5" y2="958" stroke="rgba(240,250,255,0.09)" stroke-width="1"/>
<line x1="932.5" y1="776" x2="932.5" y2="958" stroke="rgba(240,250,255,0.09)" stroke-width="1"/>
<line x1="1037.5" y1="776" x2="1037.5" y2="958" stroke="rgba(240,250,255,0.09)" stroke-width="1"/>
<line x1="1142.5" y1="776" x2="1142.5" y2="958" stroke="rgba(240,250,255,0.09)" stroke-width="1"/>
<line x1="1247.5" y1="776" x2="1247.5" y2="958" stroke="rgba(240,250,255,0.09)" stroke-width="1"/>
<line x1="76" y1="795.5" x2="1338.5" y2="795.5" stroke="rgba(240,250,255,0.09)" stroke-width="1"/>
<line x1="76" y1="830.5" x2="1338.5" y2="830.5" stroke="rgba(240,250,255,0.09)" stroke-width="1"/>
<line x1="76" y1="864.5" x2="1338.5" y2="864.5" stroke="rgba(240,250,255,0.09)" stroke-width="1"/>
<line x1="76" y1="898.5" x2="1338.5" y2="898.5" stroke="rgba(240,250,255,0.09)" stroke-width="1"/>
<line x1="76" y1="932.5" x2="1338.5" y2="932.5" stroke="rgba(240,250,255,0.09)" stroke-width="1"/>
<polyline points="80.5,840.5 93.5,841.5 135.5,840.5 177.5,790.5 219.5,813.5 261.5,830.5 303.5,838.5 345.5,840.5 387.5,800.5 429.5,822.5 470.5,794.5 512.5,835.5 554.5,837.5 596.5,801.5 638.5,837.5 680.5,835.5 722.5,835.5 764.5,837.5 806.5,809.5 848.5,837.5 890.5,837.5 932.5,841.5 974.5,829.5 1016.5,805.5 1058.5,841.5 1100.5,841.5 1142.5,808.5 1183.5,806.5 1225.5,834.5 1267.5,835.5 1309.5,836.5" fill="none" stroke="#37872d" stroke-width="1.1" stroke-linejoin="round" stroke-opacity="1"/>
<polyline points="80.5,857.5 93.5,857.5 135.5,857.5 177.5,812.5 219.5,832.5 261.5,848.5 303.5,855.5 345.5,857.5 387.5,822.5 429.5,850.5 470.5,823.5 512.5,853.5 554.5,855.5 596.5,823.5 638.5,854.5 680.5,853.5 722.5,853.5 764.5,855.5 806.5,831.5 848.5,855.5 890.5,854.5 932.5,858.5 974.5,847.5 1016.5,827.5 1058.5,859.5 1100.5,858.5 1142.5,826.5 1183.5,824.5 1225.5,852.5 1267.5,853.5 1309.5,854.5" fill="none" stroke="#73bf69" stroke-width="1.1" stroke-linejoin="round" stroke-opacity="1"/>
<polyline points="80.5,846.5 93.5,846.5 135.5,846.5 177.5,842.5 219.5,846.5 261.5,846.5 303.5,846.5 345.5,847.5 387.5,842.5 429.5,836.5 470.5,835.5 512.5,845.5 554.5,846.5 596.5,842.5 638.5,847.5 680.5,846.5 722.5,846.5 764.5,846.5 806.5,842.5 848.5,846.5 890.5,846.5 932.5,846.5 974.5,846.5 1016.5,842.5 1058.5,846.5 1100.5,846.5 1142.5,846.5 1183.5,845.5 1225.5,846.5 1267.5,846.5 1309.5,846.5" fill="none" stroke="#ff780a" stroke-width="1.1" stroke-linejoin="round" stroke-opacity="1"/>
<polyline points="80.5,857.5 93.5,857.5 135.5,857.5 177.5,856.5 219.5,856.5 261.5,857.5 303.5,856.5 345.5,857.5 387.5,857.5 429.5,857.5 470.5,856.5 512.5,857.5 554.5,857.5 596.5,857.5 638.5,856.5 680.5,857.5 722.5,857.5 764.5,857.5 806.5,856.5 848.5,857.5 890.5,857.5 932.5,857.5 974.5,857.5 1016.5,856.5 1058.5,857.5 1100.5,857.5 1142.5,856.5 1183.5,857.5 1225.5,857.5 1267.5,857.5 1309.5,857.5" fill="none" stroke="#5794f2" stroke-width="1.1" stroke-linejoin="round" stroke-opacity="1"/>
<polyline points="80.5,862.5 93.5,862.5 135.5,862.5 177.5,862.5 219.5,862.5 261.5,861.5 303.5,862.5 345.5,862.5 387.5,862.5 429.5,862.5 470.5,862.5 512.5,861.5 554.5,862.5 596.5,862.5 638.5,862.5 680.5,862.5 722.5,862.5 764.5,862.5 806.5,861.5 848.5,862.5 890.5,862.5 932.5,862.5 974.5,862.5 1016.5,861.5 1058.5,862.5 1100.5,862.5 1142.5,862.5 1183.5,862.5 1225.5,862.5 1267.5,862.5 1309.5,862.5" fill="none" stroke="#b877d9" stroke-width="1.1" stroke-linejoin="round" stroke-opacity="0.9"/>
<line x1="80.4" y1="864.5" x2="1309.7" y2="864.5" stroke="#f9ba8f" stroke-width="1.1"/>
<polyline points="80.5,867.5 93.5,867.5 135.5,867.5 177.5,867.5 219.5,867.5 261.5,867.5 303.5,867.5 345.5,867.5 387.5,868.5 429.5,867.5 470.5,867.5 512.5,867.5 554.5,867.5 596.5,867.5 638.5,867.5 680.5,867.5 722.5,867.5 764.5,867.5 806.5,868.5 848.5,867.5 890.5,867.5 932.5,867.5 974.5,867.5 1016.5,868.5 1058.5,867.5 1100.5,867.5 1142.5,867.5 1183.5,867.5 1225.5,867.5 1267.5,867.5 1309.5,867.5" fill="none" stroke="#b7dbab" stroke-width="1.1" stroke-linejoin="round" stroke-opacity="1"/>
<polyline points="80.5,870.5 93.5,870.5 135.5,870.5 177.5,875.5 219.5,871.5 261.5,871.5 303.5,871.5 345.5,870.5 387.5,875.5 429.5,871.5 470.5,871.5 512.5,871.5 554.5,871.5 596.5,875.5 638.5,871.5 680.5,871.5 722.5,871.5 764.5,871.5 806.5,875.5 848.5,870.5 890.5,870.5 932.5,870.5 974.5,871.5 1016.5,875.5 1058.5,870.5 1100.5,870.5 1142.5,871.5 1183.5,871.5 1225.5,871.5 1267.5,871.5 1309.5,871.5" fill="none" stroke="#447ebc" stroke-width="1.1" stroke-linejoin="round" stroke-opacity="1"/>
<line x1="80.4" y1="872.5" x2="1309.7" y2="872.5" stroke="#806eb7" stroke-width="1.1"/>
<polyline points="80.5,881.5 93.5,880.5 135.5,880.5 177.5,926.5 219.5,907.5 261.5,890.5 303.5,883.5 345.5,880.5 387.5,915.5 429.5,898.5 470.5,925.5 512.5,885.5 554.5,883.5 596.5,915.5 638.5,884.5 680.5,884.5 722.5,885.5 764.5,883.5 806.5,908.5 848.5,883.5 890.5,884.5 932.5,880.5 974.5,891.5 1016.5,912.5 1058.5,880.5 1100.5,880.5 1142.5,911.5 1183.5,914.5 1225.5,886.5 1267.5,885.5 1309.5,884.5" fill="none" stroke="#1a5a96" stroke-width="1.1" stroke-linejoin="round" stroke-opacity="1"/>
<polyline points="80.5,888.5 93.5,887.5 135.5,887.5 177.5,938.5 219.5,914.5 261.5,897.5 303.5,890.5 345.5,888.5 387.5,927.5 429.5,905.5 470.5,933.5 512.5,892.5 554.5,890.5 596.5,927.5 638.5,891.5 680.5,892.5 722.5,892.5 764.5,890.5 806.5,919.5 848.5,890.5 890.5,890.5 932.5,887.5 974.5,898.5 1016.5,923.5 1058.5,887.5 1100.5,887.5 1142.5,919.5 1183.5,922.5 1225.5,893.5 1267.5,892.5 1309.5,891.5" fill="none" stroke="#70dbed" stroke-width="1.1" stroke-linejoin="round" stroke-opacity="1"/>
<line x1="748.5" y1="776" x2="748.5" y2="954" stroke="#6f90aa" stroke-width="1.1" stroke-dasharray="3 2"/>
</svg>
<div style="position:absolute;left:1354.2px;top:800px;width:14px;height:4px;background:#73bf69;border-radius:1px"></div>
<div style="position:absolute;left:1354.2px;top:824px;width:14px;height:4px;background:#f2cc0c;border-radius:1px"></div>
<div style="position:absolute;left:1354.2px;top:848px;width:14px;height:4px;background:#8ab8ff;border-radius:1px"></div>
<div style="position:absolute;left:1354.2px;top:872px;width:14px;height:4px;background:#ff780a;border-radius:1px"></div>
<div style="position:absolute;left:1354.2px;top:896px;width:14px;height:4px;background:#f2495c;border-radius:1px"></div>
<div style="position:absolute;left:1354.2px;top:919.2px;width:14px;height:4px;background:#5794f2;border-radius:1px"></div>
<div style="position:absolute;left:1354.2px;top:943px;width:14px;height:4px;background:#b877d9;border-radius:1px"></div>
<div style="position:absolute;left:1354.2px;top:967px;width:14px;height:4px;background:#705da0;border-radius:1px"></div>
<div style="position:absolute;left:1346px;top:790px;width:271px;height:1px;background:#24272c"></div>
<div style="position:absolute;left:1346px;top:814px;width:271px;height:1px;background:#24272c"></div>
<div style="position:absolute;left:1346px;top:838px;width:271px;height:1px;background:#24272c"></div>
<div style="position:absolute;left:1346px;top:861px;width:271px;height:1px;background:#24272c"></div>
<div style="position:absolute;left:1346px;top:885px;width:271px;height:1px;background:#24272c"></div>
<div style="position:absolute;left:1346px;top:909px;width:271px;height:1px;background:#24272c"></div>
<div style="position:absolute;left:1346px;top:933px;width:271px;height:1px;background:#24272c"></div>
<div style="position:absolute;left:1346px;top:957px;width:271px;height:1px;background:#24272c"></div>
<div style="position:absolute;left:1609.5px;top:769px;width:7.5px;height:84.5px;background:#2f3136;border-radius:4px"></div>
<svg style="left:13px;top:1035px" width="1300" height="190" viewBox="13 1035 1300 190">
<polygon points="68.5,1098.5 81.5,1098.5 122.5,1098.5 164.5,1061.5 205.5,1078.5 246.5,1091.5 288.5,1096.5 329.5,1098.5 370.5,1070.5 412.5,1086.5 453.5,1065.5 494.5,1094.5 536.5,1096.5 577.5,1071.5 618.5,1096.5 659.5,1094.5 701.5,1094.5 742.5,1096.5 783.5,1075.5 825.5,1096.5 866.5,1096.5 907.5,1099.5 949.5,1088.5 990.5,1073.5 1031.5,1099.5 1073.5,1098.5 1114.5,1071.5 1155.5,1069.5 1197.5,1093.5 1238.5,1094.5 1279.5,1095.5 1279.5,1131.5 68.5,1131.5" fill="#dfe8cf" fill-opacity="0.1" stroke="none"/>
<polygon points="68.5,1108.5 81.5,1108.5 122.5,1108.5 164.5,1098.5 205.5,1102.5 246.5,1106.5 288.5,1107.5 329.5,1108.5 370.5,1101.5 412.5,1100.5 453.5,1093.5 494.5,1106.5 536.5,1108.5 577.5,1102.5 618.5,1107.5 659.5,1107.5 701.5,1107.5 742.5,1108.5 783.5,1102.5 825.5,1107.5 866.5,1107.5 907.5,1108.5 949.5,1104.5 990.5,1101.5 1031.5,1108.5 1073.5,1108.5 1114.5,1098.5 1155.5,1097.5 1197.5,1106.5 1238.5,1107.5 1279.5,1107.5 1279.5,1131.5 68.5,1131.5" fill="#c15c17" fill-opacity="0.09" stroke="none"/>
<polygon points="68.5,1121.5 81.5,1121.5 122.5,1121.5 164.5,1094.5 205.5,1105.5 246.5,1115.5 288.5,1119.5 329.5,1121.5 370.5,1100.5 412.5,1117.5 453.5,1102.5 494.5,1118.5 536.5,1119.5 577.5,1100.5 618.5,1119.5 659.5,1118.5 701.5,1118.5 742.5,1119.5 783.5,1104.5 825.5,1119.5 866.5,1119.5 907.5,1121.5 949.5,1115.5 990.5,1102.5 1031.5,1122.5 1073.5,1121.5 1114.5,1104.5 1155.5,1102.5 1197.5,1117.5 1238.5,1118.5 1279.5,1119.5 1279.5,1131.5 68.5,1131.5" fill="#37872d" fill-opacity="0.1" stroke="none"/>
<rect x="68.4" y="1114.5" width="1211.3" height="17.0" fill="#0a437c" fill-opacity="0.10"/>
<rect x="68.4" y="1125.5" width="1211.3" height="6.0" fill="#6d1f62" fill-opacity="0.10"/>
<polygon points="68.5,1163.5 81.5,1163.5 122.5,1163.5 164.5,1200.5 205.5,1183.5 246.5,1170.5 288.5,1165.5 329.5,1163.5 370.5,1191.5 412.5,1175.5 453.5,1196.5 494.5,1167.5 536.5,1165.5 577.5,1190.5 618.5,1165.5 659.5,1167.5 701.5,1167.5 742.5,1165.5 783.5,1186.5 825.5,1165.5 866.5,1165.5 907.5,1162.5 949.5,1172.5 990.5,1188.5 1031.5,1162.5 1073.5,1163.5 1114.5,1190.5 1155.5,1192.5 1197.5,1168.5 1238.5,1167.5 1279.5,1166.5 1279.5,1131.5 68.5,1131.5" fill="#7ea6ee" fill-opacity="0.1" stroke="none"/>
<polygon points="68.5,1153.5 81.5,1152.5 122.5,1152.5 164.5,1179.5 205.5,1167.5 246.5,1158.5 288.5,1154.5 329.5,1152.5 370.5,1173.5 412.5,1163.5 453.5,1179.5 494.5,1155.5 536.5,1154.5 577.5,1173.5 618.5,1154.5 659.5,1155.5 701.5,1155.5 742.5,1154.5 783.5,1170.5 825.5,1155.5 866.5,1155.5 907.5,1152.5 949.5,1159.5 990.5,1172.5 1031.5,1152.5 1073.5,1152.5 1114.5,1170.5 1155.5,1172.5 1197.5,1156.5 1238.5,1156.5 1279.5,1155.5 1279.5,1131.5 68.5,1131.5" fill="#a8c8e0" fill-opacity="0.12" stroke="none"/>
<rect x="68.4" y="1131.5" width="1211.3" height="16.0" fill="#e0d4f4" fill-opacity="0.10"/>
<polygon points="68.5,1141.5 81.5,1141.5 122.5,1141.5 164.5,1151.5 205.5,1146.5 246.5,1143.5 288.5,1141.5 329.5,1141.5 370.5,1148.5 412.5,1142.5 453.5,1148.5 494.5,1143.5 536.5,1141.5 577.5,1146.5 618.5,1141.5 659.5,1142.5 701.5,1142.5 742.5,1141.5 783.5,1147.5 825.5,1141.5 866.5,1141.5 907.5,1140.5 949.5,1144.5 990.5,1147.5 1031.5,1140.5 1073.5,1141.5 1114.5,1150.5 1155.5,1151.5 1197.5,1142.5 1238.5,1142.5 1279.5,1142.5 1279.5,1131.5 68.5,1131.5" fill="#c0ecff" fill-opacity="0.09" stroke="none"/>
<rect x="68.4" y="1131.5" width="1211.3" height="6.0" fill="#78c47e" fill-opacity="0.17"/>
<line x1="81.5" y1="1041.5" x2="81.5" y2="1224" stroke="rgba(240,250,255,0.09)" stroke-width="1"/>
<line x1="184.5" y1="1041.5" x2="184.5" y2="1224" stroke="rgba(240,250,255,0.09)" stroke-width="1"/>
<line x1="288.5" y1="1041.5" x2="288.5" y2="1224" stroke="rgba(240,250,255,0.09)" stroke-width="1"/>
<line x1="391.5" y1="1041.5" x2="391.5" y2="1224" stroke="rgba(240,250,255,0.09)" stroke-width="1"/>
<line x1="494.5" y1="1041.5" x2="494.5" y2="1224" stroke="rgba(240,250,255,0.09)" stroke-width="1"/>
<line x1="598.5" y1="1041.5" x2="598.5" y2="1224" stroke="rgba(240,250,255,0.09)" stroke-width="1"/>
<line x1="701.5" y1="1041.5" x2="701.5" y2="1224" stroke="rgba(240,250,255,0.09)" stroke-width="1"/>
<line x1="804.5" y1="1041.5" x2="804.5" y2="1224" stroke="rgba(240,250,255,0.09)" stroke-width="1"/>
<line x1="907.5" y1="1041.5" x2="907.5" y2="1224" stroke="rgba(240,250,255,0.09)" stroke-width="1"/>
<line x1="1011.5" y1="1041.5" x2="1011.5" y2="1224" stroke="rgba(240,250,255,0.09)" stroke-width="1"/>
<line x1="1114.5" y1="1041.5" x2="1114.5" y2="1224" stroke="rgba(240,250,255,0.09)" stroke-width="1"/>
<line x1="1217.5" y1="1041.5" x2="1217.5" y2="1224" stroke="rgba(240,250,255,0.09)" stroke-width="1"/>
<line x1="64" y1="1075.5" x2="1308" y2="1075.5" stroke="rgba(240,250,255,0.09)" stroke-width="1"/>
<line x1="64" y1="1131.5" x2="1308" y2="1131.5" stroke="rgba(240,250,255,0.09)" stroke-width="1"/>
<line x1="64" y1="1186.5" x2="1308" y2="1186.5" stroke="rgba(240,250,255,0.09)" stroke-width="1"/>
<line x1="68.4" y1="1064.5" x2="1308" y2="1064.5" stroke="#6f90aa" stroke-width="1.1" stroke-dasharray="3 2"/>
<polyline points="68.5,1098.5 81.5,1098.5 122.5,1098.5 164.5,1061.5 205.5,1078.5 246.5,1091.5 288.5,1096.5 329.5,1098.5 370.5,1070.5 412.5,1086.5 453.5,1065.5 494.5,1094.5 536.5,1096.5 577.5,1071.5 618.5,1096.5 659.5,1094.5 701.5,1094.5 742.5,1096.5 783.5,1075.5 825.5,1096.5 866.5,1096.5 907.5,1099.5 949.5,1088.5 990.5,1073.5 1031.5,1099.5 1073.5,1098.5 1114.5,1071.5 1155.5,1069.5 1197.5,1093.5 1238.5,1094.5 1279.5,1095.5" fill="none" stroke="#dce6c8" stroke-width="1.2" stroke-linejoin="round" stroke-opacity="1"/>
<polyline points="68.5,1108.5 81.5,1108.5 122.5,1108.5 164.5,1098.5 205.5,1102.5 246.5,1106.5 288.5,1107.5 329.5,1108.5 370.5,1101.5 412.5,1100.5 453.5,1093.5 494.5,1106.5 536.5,1108.5 577.5,1102.5 618.5,1107.5 659.5,1107.5 701.5,1107.5 742.5,1108.5 783.5,1102.5 825.5,1107.5 866.5,1107.5 907.5,1108.5 949.5,1104.5 990.5,1101.5 1031.5,1108.5 1073.5,1108.5 1114.5,1098.5 1155.5,1097.5 1197.5,1106.5 1238.5,1107.5 1279.5,1107.5" fill="none" stroke="#b85a1a" stroke-width="1.1" stroke-linejoin="round" stroke-opacity="1"/>
<polyline points="68.5,1121.5 81.5,1121.5 122.5,1121.5 164.5,1094.5 205.5,1105.5 246.5,1115.5 288.5,1119.5 329.5,1121.5 370.5,1100.5 412.5,1117.5 453.5,1102.5 494.5,1118.5 536.5,1119.5 577.5,1100.5 618.5,1119.5 659.5,1118.5 701.5,1118.5 742.5,1119.5 783.5,1104.5 825.5,1119.5 866.5,1119.5 907.5,1121.5 949.5,1115.5 990.5,1102.5 1031.5,1122.5 1073.5,1121.5 1114.5,1104.5 1155.5,1102.5 1197.5,1117.5 1238.5,1118.5 1279.5,1119.5" fill="none" stroke="#55744a" stroke-width="1.1" stroke-linejoin="round" stroke-opacity="1"/>
<line x1="68.4" y1="1114.5" x2="1279.7" y2="1114.5" stroke="#0c3c6a" stroke-width="1.1"/>
<line x1="68.4" y1="1125.5" x2="1279.7" y2="1125.5" stroke="#632d5e" stroke-width="1.1"/>
<line x1="68.4" y1="1137.5" x2="1279.7" y2="1137.5" stroke="#78c47e" stroke-width="1.1"/>
<polyline points="68.5,1141.5 81.5,1141.5 122.5,1141.5 164.5,1151.5 205.5,1146.5 246.5,1143.5 288.5,1141.5 329.5,1141.5 370.5,1148.5 412.5,1142.5 453.5,1148.5 494.5,1143.5 536.5,1141.5 577.5,1146.5 618.5,1141.5 659.5,1142.5 701.5,1142.5 742.5,1141.5 783.5,1147.5 825.5,1141.5 866.5,1141.5 907.5,1140.5 949.5,1144.5 990.5,1147.5 1031.5,1140.5 1073.5,1141.5 1114.5,1150.5 1155.5,1151.5 1197.5,1142.5 1238.5,1142.5 1279.5,1142.5" fill="none" stroke="#c4ecff" stroke-width="1.1" stroke-linejoin="round" stroke-opacity="1"/>
<line x1="68.4" y1="1147.5" x2="1279.7" y2="1147.5" stroke="#e0d4f4" stroke-width="1.1"/>
<polyline points="68.5,1153.5 81.5,1152.5 122.5,1152.5 164.5,1179.5 205.5,1167.5 246.5,1158.5 288.5,1154.5 329.5,1152.5 370.5,1173.5 412.5,1163.5 453.5,1179.5 494.5,1155.5 536.5,1154.5 577.5,1173.5 618.5,1154.5 659.5,1155.5 701.5,1155.5 742.5,1154.5 783.5,1170.5 825.5,1155.5 866.5,1155.5 907.5,1152.5 949.5,1159.5 990.5,1172.5 1031.5,1152.5 1073.5,1152.5 1114.5,1170.5 1155.5,1172.5 1197.5,1156.5 1238.5,1156.5 1279.5,1155.5" fill="none" stroke="#a8c8e0" stroke-width="1.1" stroke-linejoin="round" stroke-opacity="1"/>
<polyline points="68.5,1163.5 81.5,1163.5 122.5,1163.5 164.5,1200.5 205.5,1183.5 246.5,1170.5 288.5,1165.5 329.5,1163.5 370.5,1191.5 412.5,1175.5 453.5,1196.5 494.5,1167.5 536.5,1165.5 577.5,1190.5 618.5,1165.5 659.5,1167.5 701.5,1167.5 742.5,1165.5 783.5,1186.5 825.5,1165.5 866.5,1165.5 907.5,1162.5 949.5,1172.5 990.5,1188.5 1031.5,1162.5 1073.5,1163.5 1114.5,1190.5 1155.5,1192.5 1197.5,1168.5 1238.5,1167.5 1279.5,1166.5" fill="none" stroke="#7ea6ee" stroke-width="1.1" stroke-linejoin="round" stroke-opacity="1"/>
<line x1="68.4" y1="1130.5" x2="1279.7" y2="1130.5" stroke="#fff0d4" stroke-width="1.05"/>
<line x1="68.4" y1="1131.6" x2="1279.7" y2="1131.6" stroke="#ff7f10" stroke-width="1.15"/>
<line x1="726.5" y1="1041.5" x2="726.5" y2="1220" stroke="#6f90aa" stroke-width="1.1" stroke-dasharray="3 2"/>
<circle cx="741.9" cy="1096.3" r="5" fill="#dce6c8" fill-opacity="0.4"/><circle cx="741.9" cy="1096.3" r="2.700" fill="#dce6c8"/>
<circle cx="741.9" cy="1107.3" r="5" fill="#b85a1a" fill-opacity="0.4"/><circle cx="741.9" cy="1107.3" r="2.700" fill="#b85a1a"/>
<circle cx="741.9" cy="1114.7" r="5" fill="#0b3566" fill-opacity="0.4"/><circle cx="741.9" cy="1114.7" r="2.700" fill="#0b3566"/>
<circle cx="741.9" cy="1119.4" r="5" fill="#3f5a30" fill-opacity="0.4"/><circle cx="741.9" cy="1119.4" r="2.700" fill="#3f5a30"/>
<circle cx="741.9" cy="1124.8" r="5" fill="#4a1545" fill-opacity="0.4"/><circle cx="741.9" cy="1124.8" r="2.700" fill="#4a1545"/>
<circle cx="741.9" cy="1137.4" r="5" fill="#73bf69" fill-opacity="0.4"/><circle cx="741.9" cy="1137.4" r="2.700" fill="#73bf69"/>
<circle cx="741.9" cy="1141.4" r="5" fill="#cfe4f2" fill-opacity="0.4"/><circle cx="741.9" cy="1141.4" r="2.700" fill="#cfe4f2"/>
<circle cx="741.9" cy="1147.5" r="5" fill="#e0d4f4" fill-opacity="0.4"/><circle cx="741.9" cy="1147.5" r="2.700" fill="#e0d4f4"/>
<circle cx="741.9" cy="1154.7" r="5" fill="#b8d4ea" fill-opacity="0.4"/><circle cx="741.9" cy="1154.7" r="2.700" fill="#b8d4ea"/>
<circle cx="741.9" cy="1165.5" r="5" fill="#7ea6ee" fill-opacity="0.4"/><circle cx="741.9" cy="1165.5" r="2.700" fill="#7ea6ee"/>
<circle cx="741.9" cy="1130.4" r="5" fill="#f5a040" fill-opacity="0.95"/><circle cx="741.9" cy="1130.4" r="2.900" fill="#ff780a"/>
</svg>
<div style="position:absolute;left:1323.2px;top:1066px;width:14px;height:4px;background:#73bf69;border-radius:1px"></div>
<div style="position:absolute;left:1323.2px;top:1090px;width:14px;height:4px;background:#f2cc0c;border-radius:1px"></div>
<div style="position:absolute;left:1323.2px;top:1114px;width:14px;height:4px;background:#8ab8ff;border-radius:1px"></div>
<div style="position:absolute;left:1323.2px;top:1138px;width:14px;height:4px;background:#ff780a;border-radius:1px"></div>
<div style="position:absolute;left:1323.2px;top:1162px;width:14px;height:4px;background:#f2495c;border-radius:1px"></div>
<div style="position:absolute;left:1323.2px;top:1185.2px;width:14px;height:4px;background:#5794f2;border-radius:1px"></div>
<div style="position:absolute;left:1323.2px;top:1209px;width:14px;height:4px;background:#b877d9;border-radius:1px"></div>
<div style="position:absolute;left:1323.2px;top:1233px;width:14px;height:4px;background:#705da0;border-radius:1px"></div>
<div style="position:absolute;left:1315px;top:1056px;width:302px;height:1px;background:#24272c"></div>
<div style="position:absolute;left:1315px;top:1080px;width:302px;height:1px;background:#24272c"></div>
<div style="position:absolute;left:1315px;top:1104px;width:302px;height:1px;background:#24272c"></div>
<div style="position:absolute;left:1315px;top:1127px;width:302px;height:1px;background:#24272c"></div>
<div style="position:absolute;left:1315px;top:1151px;width:302px;height:1px;background:#24272c"></div>
<div style="position:absolute;left:1315px;top:1175px;width:302px;height:1px;background:#24272c"></div>
<div style="position:absolute;left:1315px;top:1199px;width:302px;height:1px;background:#24272c"></div>
<div style="position:absolute;left:1315px;top:1223px;width:302px;height:1px;background:#24272c"></div>
<div style="position:absolute;left:1609.5px;top:1035px;width:7.5px;height:29px;background:#2f3136;border-radius:4px"></div>
<div style="position:absolute;left:1642px;top:0px;width:1px;height:1276px;background:#38393d"></div>
<div style="position:absolute;left:0px;top:1274px;width:1643px;height:1px;background:rgba(45,110,148,0.18)"></div>
<div style="position:absolute;left:0px;top:1275px;width:1643px;height:1px;background:#2d6e94"></div>
<div style="position:absolute;left:1642px;top:214px;width:1px;height:1px;background:#c8917c"></div>
<div style="position:absolute;left:1642px;top:233px;width:1px;height:1px;background:#c8917c"></div>
<div style="position:absolute;left:1642px;top:222px;width:1px;height:7px;background:#3b6c8a"></div>
<div style="position:absolute;left:0;top:0;width:1643px;height:1276px;will-change:transform">
<div style="position:absolute;top:73.12px;line-height:12px;white-space:pre;color:#ccccdc;font-size:12px;font-weight:normal;font-family:'Liberation Sans',sans-serif;letter-spacing:-0.415px;right:1582.91px;">0.0%</div>
<div style="position:absolute;top:88.12px;line-height:12px;white-space:pre;color:#ccccdc;font-size:12px;font-weight:normal;font-family:'Liberation Sans',sans-serif;left:79.50px;transform:translateX(-50%);">10:40</div>
<div style="position:absolute;top:88.12px;line-height:12px;white-space:pre;color:#ccccdc;font-size:12px;font-weight:normal;font-family:'Liberation Sans',sans-serif;left:170.50px;transform:translateX(-50%);">10:50</div>
<div style="position:absolute;top:88.12px;line-height:12px;white-space:pre;color:#ccccdc;font-size:12px;font-weight:normal;font-family:'Liberation Sans',sans-serif;left:261.50px;transform:translateX(-50%);">11:00</div>
<div style="position:absolute;top:88.12px;line-height:12px;white-space:pre;color:#ccccdc;font-size:12px;font-weight:normal;font-family:'Liberation Sans',sans-serif;left:352.50px;transform:translateX(-50%);">11:10</div>
<div style="position:absolute;top:88.12px;line-height:12px;white-space:pre;color:#ccccdc;font-size:12px;font-weight:normal;font-family:'Liberation Sans',sans-serif;left:443.50px;transform:translateX(-50%);">11:20</div>
<div style="position:absolute;top:88.12px;line-height:12px;white-space:pre;color:#ccccdc;font-size:12px;font-weight:normal;font-family:'Liberation Sans',sans-serif;left:534.50px;transform:translateX(-50%);">11:30</div>
<div style="position:absolute;top:58.12px;line-height:12px;white-space:pre;color:#ccccdc;font-size:12px;font-weight:normal;font-family:'Liberation Sans',sans-serif;letter-spacing:0.177px;left:654.5px;">Interrupt</div>
<div style="position:absolute;top:82.12px;line-height:12px;white-space:pre;color:#ccccdc;font-size:12px;font-weight:normal;font-family:'Liberation Sans',sans-serif;letter-spacing:-0.127px;left:654.5px;">Soft IRQ</div>
<div style="position:absolute;top:58.12px;line-height:12px;white-space:pre;color:#ccccdc;font-size:12px;font-weight:normal;font-family:'Liberation Sans',sans-serif;letter-spacing:-0.872px;right:893.87px;">0%</div>
<div style="position:absolute;top:58.12px;line-height:12px;white-space:pre;color:#ccccdc;font-size:12px;font-weight:normal;font-family:'Liberation Sans',sans-serif;letter-spacing:-0.872px;right:845.37px;">0%</div>
<div style="position:absolute;top:82.12px;line-height:12px;white-space:pre;color:#ccccdc;font-size:12px;font-weight:normal;font-family:'Liberation Sans',sans-serif;letter-spacing:-0.406px;right:893.41px;">5.43%</div>
<div style="position:absolute;top:82.12px;line-height:12px;white-space:pre;color:#ccccdc;font-size:12px;font-weight:normal;font-family:'Liberation Sans',sans-serif;letter-spacing:-0.406px;right:844.91px;">5.43%</div>
<div style="position:absolute;top:73.12px;line-height:12px;white-space:pre;color:#ccccdc;font-size:12px;font-weight:normal;font-family:'Liberation Sans',sans-serif;letter-spacing:-0.062px;right:787.06px;">5.0</div>
<div style="position:absolute;top:88.12px;line-height:12px;white-space:pre;color:#ccccdc;font-size:12px;font-weight:normal;font-family:'Liberation Sans',sans-serif;left:874.00px;transform:translateX(-50%);">10:40</div>
<div style="position:absolute;top:88.12px;line-height:12px;white-space:pre;color:#ccccdc;font-size:12px;font-weight:normal;font-family:'Liberation Sans',sans-serif;left:962.00px;transform:translateX(-50%);">10:50</div>
<div style="position:absolute;top:88.12px;line-height:12px;white-space:pre;color:#ccccdc;font-size:12px;font-weight:normal;font-family:'Liberation Sans',sans-serif;left:1050.00px;transform:translateX(-50%);">11:00</div>
<div style="position:absolute;top:88.12px;line-height:12px;white-space:pre;color:#ccccdc;font-size:12px;font-weight:normal;font-family:'Liberation Sans',sans-serif;left:1138.00px;transform:translateX(-50%);">11:10</div>
<div style="position:absolute;top:88.12px;line-height:12px;white-space:pre;color:#ccccdc;font-size:12px;font-weight:normal;font-family:'Liberation Sans',sans-serif;left:1226.00px;transform:translateX(-50%);">11:20</div>
<div style="position:absolute;top:88.12px;line-height:12px;white-space:pre;color:#ccccdc;font-size:12px;font-weight:normal;font-family:'Liberation Sans',sans-serif;left:1314.00px;transform:translateX(-50%);">11:30</div>
<div style="position:absolute;top:124.66px;line-height:16px;white-space:pre;color:#ccccdc;font-size:16px;font-weight:bold;font-family:'Liberation Sans',sans-serif;letter-spacing:-0.227px;-webkit-text-stroke:0;left:29px;">Memory</div>
<div style="position:absolute;top:694.66px;line-height:16px;white-space:pre;color:#ccccdc;font-size:16px;font-weight:bold;font-family:'Liberation Sans',sans-serif;letter-spacing:-0.134px;-webkit-text-stroke:0;left:29px;">Interface</div>
<div style="position:absolute;top:165.14px;line-height:14px;white-space:pre;color:#ccccdc;font-size:14px;font-weight:normal;font-family:'Liberation Sans',sans-serif;letter-spacing:0.185px;-webkit-text-stroke:0.85px;left:819.59px;transform:translateX(-50%);">Memory Distribution</div>
<div style="position:absolute;top:431.14px;line-height:14px;white-space:pre;color:#ccccdc;font-size:14px;font-weight:normal;font-family:'Liberation Sans',sans-serif;letter-spacing:0.141px;-webkit-text-stroke:0.85px;left:414.57px;transform:translateX(-50%);">Memory Available</div>
<div style="position:absolute;top:431.14px;line-height:14px;white-space:pre;color:#ccccdc;font-size:14px;font-weight:normal;font-family:'Liberation Sans',sans-serif;letter-spacing:0.109px;-webkit-text-stroke:0.85px;left:1224.55px;transform:translateX(-50%);">Memory Utilized</div>
<div style="position:absolute;top:735.14px;line-height:14px;white-space:pre;color:#ccccdc;font-size:14px;font-weight:normal;font-family:'Liberation Sans',sans-serif;letter-spacing:0.192px;-webkit-text-stroke:0.85px;left:819.60px;transform:translateX(-50%);">Interface Traffic</div>
<div style="position:absolute;top:1001.14px;line-height:14px;white-space:pre;color:#ccccdc;font-size:14px;font-weight:normal;font-family:'Liberation Sans',sans-serif;letter-spacing:0.195px;-webkit-text-stroke:0.85px;left:819.60px;transform:translateX(-50%);">Interface Traffic Distribution</div>
<div style="position:absolute;top:1267.14px;line-height:14px;white-space:pre;color:#ccccdc;font-size:14px;font-weight:normal;font-family:'Liberation Sans',sans-serif;letter-spacing:0.104px;-webkit-text-stroke:0.85px;left:819.55px;transform:translateX(-50%);">Interface Drops/Errors</div>
<div style="position:absolute;top:222.12px;line-height:12px;white-space:pre;color:#ccccdc;font-size:12px;font-weight:normal;font-family:'Liberation Sans',sans-serif;letter-spacing:0.062px;right:1585.94px;">80 MB</div>
<div style="position:absolute;top:262.62px;line-height:12px;white-space:pre;color:#ccccdc;font-size:12px;font-weight:normal;font-family:'Liberation Sans',sans-serif;letter-spacing:0.062px;right:1585.94px;">60 MB</div>
<div style="position:absolute;top:303.62px;line-height:12px;white-space:pre;color:#ccccdc;font-size:12px;font-weight:normal;font-family:'Liberation Sans',sans-serif;letter-spacing:0.062px;right:1585.94px;">40 MB</div>
<div style="position:absolute;top:343.62px;line-height:12px;white-space:pre;color:#ccccdc;font-size:12px;font-weight:normal;font-family:'Liberation Sans',sans-serif;letter-spacing:0.062px;right:1585.94px;">20 MB</div>
<div style="position:absolute;top:392.12px;line-height:12px;white-space:pre;color:#ccccdc;font-size:12px;font-weight:normal;font-family:'Liberation Sans',sans-serif;left:88.40px;transform:translateX(-50%);">10:40</div>
<div style="position:absolute;top:392.12px;line-height:12px;white-space:pre;color:#ccccdc;font-size:12px;font-weight:normal;font-family:'Liberation Sans',sans-serif;left:200.15px;transform:translateX(-50%);">10:45</div>
<div style="position:absolute;top:392.12px;line-height:12px;white-space:pre;color:#ccccdc;font-size:12px;font-weight:normal;font-family:'Liberation Sans',sans-serif;left:311.90px;transform:translateX(-50%);">10:50</div>
<div style="position:absolute;top:392.12px;line-height:12px;white-space:pre;color:#ccccdc;font-size:12px;font-weight:normal;font-family:'Liberation Sans',sans-serif;left:423.65px;transform:translateX(-50%);">10:55</div>
<div style="position:absolute;top:392.12px;line-height:12px;white-space:pre;color:#ccccdc;font-size:12px;font-weight:normal;font-family:'Liberation Sans',sans-serif;left:535.40px;transform:translateX(-50%);">11:00</div>
<div style="position:absolute;top:392.12px;line-height:12px;white-space:pre;color:#ccccdc;font-size:12px;font-weight:normal;font-family:'Liberation Sans',sans-serif;left:647.15px;transform:translateX(-50%);">11:05</div>
<div style="position:absolute;top:392.12px;line-height:12px;white-space:pre;color:#ccccdc;font-size:12px;font-weight:normal;font-family:'Liberation Sans',sans-serif;left:758.90px;transform:translateX(-50%);">11:10</div>
<div style="position:absolute;top:392.12px;line-height:12px;white-space:pre;color:#ccccdc;font-size:12px;font-weight:normal;font-family:'Liberation Sans',sans-serif;left:870.65px;transform:translateX(-50%);">11:15</div>
<div style="position:absolute;top:392.12px;line-height:12px;white-space:pre;color:#ccccdc;font-size:12px;font-weight:normal;font-family:'Liberation Sans',sans-serif;left:982.40px;transform:translateX(-50%);">11:20</div>
<div style="position:absolute;top:392.12px;line-height:12px;white-space:pre;color:#ccccdc;font-size:12px;font-weight:normal;font-family:'Liberation Sans',sans-serif;left:1094.15px;transform:translateX(-50%);">11:25</div>
<div style="position:absolute;top:392.12px;line-height:12px;white-space:pre;color:#ccccdc;font-size:12px;font-weight:normal;font-family:'Liberation Sans',sans-serif;left:1205.90px;transform:translateX(-50%);">11:30</div>
<div style="position:absolute;top:392.12px;line-height:12px;white-space:pre;color:#ccccdc;font-size:12px;font-weight:normal;font-family:'Liberation Sans',sans-serif;left:1317.65px;transform:translateX(-50%);">11:35</div>
<div style="position:absolute;top:201.92px;line-height:12px;white-space:pre;color:#6e9fff;font-size:12px;font-weight:normal;font-family:'Liberation Sans',sans-serif;letter-spacing:0.276px;right:95.22px;">Max</div>
<div style="position:absolute;top:201.92px;line-height:12px;white-space:pre;color:#6e9fff;font-size:12px;font-weight:normal;font-family:'Liberation Sans',sans-serif;letter-spacing:0.203px;right:33.80px;">Last</div>
<div style="position:absolute;top:226.12px;line-height:12px;white-space:pre;color:#ccccdc;font-size:12px;font-weight:normal;font-family:'Liberation Sans',sans-serif;letter-spacing:0.365px;left:1445px;">Buffer</div>
<div style="position:absolute;top:226.12px;line-height:12px;white-space:pre;color:#ccccdc;font-size:12px;font-weight:normal;font-family:'Liberation Sans',sans-serif;letter-spacing:0.057px;right:95.64px;">29.1 MB</div>
<div style="position:absolute;top:226.12px;line-height:12px;white-space:pre;color:#ccccdc;font-size:12px;font-weight:normal;font-family:'Liberation Sans',sans-serif;letter-spacing:0.057px;right:33.94px;">29.1 MB</div>
<div style="position:absolute;top:250.12px;line-height:12px;white-space:pre;color:#ccccdc;font-size:12px;font-weight:normal;font-family:'Liberation Sans',sans-serif;letter-spacing:0.021px;left:1445px;">Cached</div>
<div style="position:absolute;top:250.12px;line-height:12px;white-space:pre;color:#ccccdc;font-size:12px;font-weight:normal;font-family:'Liberation Sans',sans-serif;letter-spacing:0.057px;right:95.64px;">84.0 MB</div>
<div style="position:absolute;top:250.12px;line-height:12px;white-space:pre;color:#ccccdc;font-size:12px;font-weight:normal;font-family:'Liberation Sans',sans-serif;letter-spacing:0.057px;right:33.94px;">84.0 MB</div>
<div style="position:absolute;top:274.12px;line-height:12px;white-space:pre;color:#ccccdc;font-size:12px;font-weight:normal;font-family:'Liberation Sans',sans-serif;letter-spacing:-0.172px;left:1445px;">Free</div>
<div style="position:absolute;top:274.12px;line-height:12px;white-space:pre;color:#ccccdc;font-size:12px;font-weight:normal;font-family:'Liberation Sans',sans-serif;letter-spacing:0.057px;right:95.64px;">12.1 MB</div>
<div style="position:absolute;top:274.12px;line-height:12px;white-space:pre;color:#ccccdc;font-size:12px;font-weight:normal;font-family:'Liberation Sans',sans-serif;letter-spacing:0.057px;right:33.94px;">12.1 MB</div>
<div style="position:absolute;top:296.92px;line-height:12px;white-space:pre;color:#ccccdc;font-size:12px;font-weight:normal;font-family:'Liberation Sans',sans-serif;letter-spacing:-0.034px;left:1445px;">Shared</div>
<div style="position:absolute;top:296.92px;line-height:12px;white-space:pre;color:#ccccdc;font-size:12px;font-weight:normal;font-family:'Liberation Sans',sans-serif;letter-spacing:0.184px;right:95.52px;">11.9 MB</div>
<div style="position:absolute;top:296.92px;line-height:12px;white-space:pre;color:#ccccdc;font-size:12px;font-weight:normal;font-family:'Liberation Sans',sans-serif;letter-spacing:0.184px;right:33.82px;">11.9 MB</div>
<div style="position:absolute;top:491.62px;line-height:12px;white-space:pre;color:#ccccdc;font-size:12px;font-weight:normal;font-family:'Liberation Sans',sans-serif;letter-spacing:0.062px;right:1575.94px;">12 MB</div>
<div style="position:absolute;top:530.12px;line-height:12px;white-space:pre;color:#ccccdc;font-size:12px;font-weight:normal;font-family:'Liberation Sans',sans-serif;letter-spacing:0.170px;right:1575.83px;">11.8 MB</div>
<div style="position:absolute;top:567.12px;line-height:12px;white-space:pre;color:#ccccdc;font-size:12px;font-weight:normal;font-family:'Liberation Sans',sans-serif;letter-spacing:0.170px;right:1575.83px;">11.6 MB</div>
<div style="position:absolute;top:610.12px;line-height:12px;white-space:pre;color:#ccccdc;font-size:12px;font-weight:normal;font-family:'Liberation Sans',sans-serif;left:84.30px;transform:translateX(-50%);">10:40</div>
<div style="position:absolute;top:610.12px;line-height:12px;white-space:pre;color:#ccccdc;font-size:12px;font-weight:normal;font-family:'Liberation Sans',sans-serif;left:144.50px;transform:translateX(-50%);">10:45</div>
<div style="position:absolute;top:610.12px;line-height:12px;white-space:pre;color:#ccccdc;font-size:12px;font-weight:normal;font-family:'Liberation Sans',sans-serif;left:204.70px;transform:translateX(-50%);">10:50</div>
<div style="position:absolute;top:610.12px;line-height:12px;white-space:pre;color:#ccccdc;font-size:12px;font-weight:normal;font-family:'Liberation Sans',sans-serif;left:264.90px;transform:translateX(-50%);">10:55</div>
<div style="position:absolute;top:610.12px;line-height:12px;white-space:pre;color:#ccccdc;font-size:12px;font-weight:normal;font-family:'Liberation Sans',sans-serif;left:325.10px;transform:translateX(-50%);">11:00</div>
<div style="position:absolute;top:610.12px;line-height:12px;white-space:pre;color:#ccccdc;font-size:12px;font-weight:normal;font-family:'Liberation Sans',sans-serif;left:385.30px;transform:translateX(-50%);">11:05</div>
<div style="position:absolute;top:610.12px;line-height:12px;white-space:pre;color:#ccccdc;font-size:12px;font-weight:normal;font-family:'Liberation Sans',sans-serif;left:445.50px;transform:translateX(-50%);">11:10</div>
<div style="position:absolute;top:610.12px;line-height:12px;white-space:pre;color:#ccccdc;font-size:12px;font-weight:normal;font-family:'Liberation Sans',sans-serif;left:505.70px;transform:translateX(-50%);">11:15</div>
<div style="position:absolute;top:610.12px;line-height:12px;white-space:pre;color:#ccccdc;font-size:12px;font-weight:normal;font-family:'Liberation Sans',sans-serif;left:565.90px;transform:translateX(-50%);">11:20</div>
<div style="position:absolute;top:610.12px;line-height:12px;white-space:pre;color:#ccccdc;font-size:12px;font-weight:normal;font-family:'Liberation Sans',sans-serif;left:626.10px;transform:translateX(-50%);">11:25</div>
<div style="position:absolute;top:610.12px;line-height:12px;white-space:pre;color:#ccccdc;font-size:12px;font-weight:normal;font-family:'Liberation Sans',sans-serif;left:686.30px;transform:translateX(-50%);">11:30</div>
<div style="position:absolute;top:610.12px;line-height:12px;white-space:pre;color:#ccccdc;font-size:12px;font-weight:normal;font-family:'Liberation Sans',sans-serif;left:746.50px;transform:translateX(-50%);">11:35</div>
<div style="position:absolute;top:627.92px;line-height:12px;white-space:pre;color:#6e9fff;font-size:12px;font-weight:normal;font-family:'Liberation Sans',sans-serif;letter-spacing:0.276px;right:905.22px;">Max</div>
<div style="position:absolute;top:627.92px;line-height:12px;white-space:pre;color:#6e9fff;font-size:12px;font-weight:normal;font-family:'Liberation Sans',sans-serif;letter-spacing:0.203px;right:844.10px;">Last</div>
<div style="position:absolute;top:652.12px;line-height:12px;white-space:pre;color:#ccccdc;font-size:12px;font-weight:normal;font-family:'Liberation Sans',sans-serif;letter-spacing:-0.297px;left:52px;">Real</div>
<div style="position:absolute;top:652.12px;line-height:12px;white-space:pre;color:#ccccdc;font-size:12px;font-weight:normal;font-family:'Liberation Sans',sans-serif;letter-spacing:0.057px;right:905.54px;">12.1 MB</div>
<div style="position:absolute;top:652.12px;line-height:12px;white-space:pre;color:#ccccdc;font-size:12px;font-weight:normal;font-family:'Liberation Sans',sans-serif;letter-spacing:0.057px;right:844.04px;">12.1 MB</div>
<div style="position:absolute;top:502.12px;line-height:12px;white-space:pre;color:#ccccdc;font-size:12px;font-weight:normal;font-family:'Liberation Sans',sans-serif;letter-spacing:-0.054px;right:765.05px;">95.400%</div>
<div style="position:absolute;top:549.12px;line-height:12px;white-space:pre;color:#ccccdc;font-size:12px;font-weight:normal;font-family:'Liberation Sans',sans-serif;letter-spacing:-0.054px;right:765.05px;">95.300%</div>
<div style="position:absolute;top:596.12px;line-height:12px;white-space:pre;color:#ccccdc;font-size:12px;font-weight:normal;font-family:'Liberation Sans',sans-serif;letter-spacing:-0.054px;right:765.05px;">95.200%</div>
<div style="position:absolute;top:610.12px;line-height:12px;white-space:pre;color:#ccccdc;font-size:12px;font-weight:normal;font-family:'Liberation Sans',sans-serif;left:895.50px;transform:translateX(-50%);">10:40</div>
<div style="position:absolute;top:610.12px;line-height:12px;white-space:pre;color:#ccccdc;font-size:12px;font-weight:normal;font-family:'Liberation Sans',sans-serif;left:955.64px;transform:translateX(-50%);">10:45</div>
<div style="position:absolute;top:610.12px;line-height:12px;white-space:pre;color:#ccccdc;font-size:12px;font-weight:normal;font-family:'Liberation Sans',sans-serif;left:1015.78px;transform:translateX(-50%);">10:50</div>
<div style="position:absolute;top:610.12px;line-height:12px;white-space:pre;color:#ccccdc;font-size:12px;font-weight:normal;font-family:'Liberation Sans',sans-serif;left:1075.92px;transform:translateX(-50%);">10:55</div>
<div style="position:absolute;top:610.12px;line-height:12px;white-space:pre;color:#ccccdc;font-size:12px;font-weight:normal;font-family:'Liberation Sans',sans-serif;left:1136.06px;transform:translateX(-50%);">11:00</div>
<div style="position:absolute;top:610.12px;line-height:12px;white-space:pre;color:#ccccdc;font-size:12px;font-weight:normal;font-family:'Liberation Sans',sans-serif;left:1196.20px;transform:translateX(-50%);">11:05</div>
<div style="position:absolute;top:610.12px;line-height:12px;white-space:pre;color:#ccccdc;font-size:12px;font-weight:normal;font-family:'Liberation Sans',sans-serif;left:1256.34px;transform:translateX(-50%);">11:10</div>
<div style="position:absolute;top:610.12px;line-height:12px;white-space:pre;color:#ccccdc;font-size:12px;font-weight:normal;font-family:'Liberation Sans',sans-serif;left:1316.48px;transform:translateX(-50%);">11:15</div>
<div style="position:absolute;top:610.12px;line-height:12px;white-space:pre;color:#ccccdc;font-size:12px;font-weight:normal;font-family:'Liberation Sans',sans-serif;left:1376.62px;transform:translateX(-50%);">11:20</div>
<div style="position:absolute;top:610.12px;line-height:12px;white-space:pre;color:#ccccdc;font-size:12px;font-weight:normal;font-family:'Liberation Sans',sans-serif;left:1436.76px;transform:translateX(-50%);">11:25</div>
<div style="position:absolute;top:610.12px;line-height:12px;white-space:pre;color:#ccccdc;font-size:12px;font-weight:normal;font-family:'Liberation Sans',sans-serif;left:1496.90px;transform:translateX(-50%);">11:30</div>
<div style="position:absolute;top:610.12px;line-height:12px;white-space:pre;color:#ccccdc;font-size:12px;font-weight:normal;font-family:'Liberation Sans',sans-serif;left:1557.04px;transform:translateX(-50%);">11:35</div>
<div style="position:absolute;top:627.92px;line-height:12px;white-space:pre;color:#6e9fff;font-size:12px;font-weight:normal;font-family:'Liberation Sans',sans-serif;letter-spacing:0.276px;right:82.62px;">Max</div>
<div style="position:absolute;top:627.92px;line-height:12px;white-space:pre;color:#6e9fff;font-size:12px;font-weight:normal;font-family:'Liberation Sans',sans-serif;letter-spacing:0.203px;right:34.00px;">Last</div>
<div style="position:absolute;top:652.12px;line-height:12px;white-space:pre;color:#ccccdc;font-size:12px;font-weight:normal;font-family:'Liberation Sans',sans-serif;letter-spacing:0.176px;left:862px;">Physical memory</div>
<div style="position:absolute;top:652.12px;line-height:12px;white-space:pre;color:#ccccdc;font-size:12px;font-weight:normal;font-family:'Liberation Sans',sans-serif;letter-spacing:-0.306px;right:83.21px;">95.6%</div>
<div style="position:absolute;top:652.12px;line-height:12px;white-space:pre;color:#ccccdc;font-size:12px;font-weight:normal;font-family:'Liberation Sans',sans-serif;letter-spacing:-0.306px;right:34.41px;">95.2%</div>
<div style="position:absolute;top:788.12px;line-height:12px;white-space:pre;color:#ccccdc;font-size:12px;font-weight:normal;font-family:'Liberation Sans',sans-serif;letter-spacing:0.402px;right:1572.10px;">40 Mb/s</div>
<div style="position:absolute;top:822.62px;line-height:12px;white-space:pre;color:#ccccdc;font-size:12px;font-weight:normal;font-family:'Liberation Sans',sans-serif;letter-spacing:0.402px;right:1572.10px;">20 Mb/s</div>
<div style="position:absolute;top:857.12px;line-height:12px;white-space:pre;color:#ccccdc;font-size:12px;font-weight:normal;font-family:'Liberation Sans',sans-serif;letter-spacing:0.397px;right:1572.10px;">0 b/s</div>
<div style="position:absolute;top:890.62px;line-height:12px;white-space:pre;color:#ccccdc;font-size:12px;font-weight:normal;font-family:'Liberation Sans',sans-serif;letter-spacing:0.289px;right:1572.21px;">-20 Mb/s</div>
<div style="position:absolute;top:925.12px;line-height:12px;white-space:pre;color:#ccccdc;font-size:12px;font-weight:normal;font-family:'Liberation Sans',sans-serif;letter-spacing:0.289px;right:1572.21px;">-40 Mb/s</div>
<div style="position:absolute;top:962.12px;line-height:12px;white-space:pre;color:#ccccdc;font-size:12px;font-weight:normal;font-family:'Liberation Sans',sans-serif;left:93.50px;transform:translateX(-50%);">10:40</div>
<div style="position:absolute;top:962.12px;line-height:12px;white-space:pre;color:#ccccdc;font-size:12px;font-weight:normal;font-family:'Liberation Sans',sans-serif;left:198.40px;transform:translateX(-50%);">10:45</div>
<div style="position:absolute;top:962.12px;line-height:12px;white-space:pre;color:#ccccdc;font-size:12px;font-weight:normal;font-family:'Liberation Sans',sans-serif;left:303.30px;transform:translateX(-50%);">10:50</div>
<div style="position:absolute;top:962.12px;line-height:12px;white-space:pre;color:#ccccdc;font-size:12px;font-weight:normal;font-family:'Liberation Sans',sans-serif;left:408.20px;transform:translateX(-50%);">10:55</div>
<div style="position:absolute;top:962.12px;line-height:12px;white-space:pre;color:#ccccdc;font-size:12px;font-weight:normal;font-family:'Liberation Sans',sans-serif;left:513.10px;transform:translateX(-50%);">11:00</div>
<div style="position:absolute;top:962.12px;line-height:12px;white-space:pre;color:#ccccdc;font-size:12px;font-weight:normal;font-family:'Liberation Sans',sans-serif;left:618.00px;transform:translateX(-50%);">11:05</div>
<div style="position:absolute;top:962.12px;line-height:12px;white-space:pre;color:#ccccdc;font-size:12px;font-weight:normal;font-family:'Liberation Sans',sans-serif;left:722.90px;transform:translateX(-50%);">11:10</div>
<div style="position:absolute;top:962.12px;line-height:12px;white-space:pre;color:#ccccdc;font-size:12px;font-weight:normal;font-family:'Liberation Sans',sans-serif;left:827.80px;transform:translateX(-50%);">11:15</div>
<div style="position:absolute;top:962.12px;line-height:12px;white-space:pre;color:#ccccdc;font-size:12px;font-weight:normal;font-family:'Liberation Sans',sans-serif;left:932.70px;transform:translateX(-50%);">11:20</div>
<div style="position:absolute;top:962.12px;line-height:12px;white-space:pre;color:#ccccdc;font-size:12px;font-weight:normal;font-family:'Liberation Sans',sans-serif;left:1037.60px;transform:translateX(-50%);">11:25</div>
<div style="position:absolute;top:962.12px;line-height:12px;white-space:pre;color:#ccccdc;font-size:12px;font-weight:normal;font-family:'Liberation Sans',sans-serif;left:1142.50px;transform:translateX(-50%);">11:30</div>
<div style="position:absolute;top:962.12px;line-height:12px;white-space:pre;color:#ccccdc;font-size:12px;font-weight:normal;font-family:'Liberation Sans',sans-serif;left:1247.40px;transform:translateX(-50%);">11:35</div>
<div style="position:absolute;top:772.12px;line-height:12px;white-space:pre;color:#6e9fff;font-size:12px;font-weight:normal;font-family:'Liberation Sans',sans-serif;letter-spacing:0.276px;right:105.92px;">Max</div>
<div style="position:absolute;top:772.12px;line-height:12px;white-space:pre;color:#6e9fff;font-size:12px;font-weight:normal;font-family:'Liberation Sans',sans-serif;letter-spacing:0.203px;right:34.10px;">Last</div>
<div style="position:absolute;top:796.12px;line-height:12px;white-space:pre;color:#ccccdc;font-size:12px;font-weight:normal;font-family:'Liberation Sans',sans-serif;letter-spacing:0.114px;left:1376.2px;">eth0:In</div>
<div style="position:absolute;top:796.12px;line-height:12px;white-space:pre;color:#ccccdc;font-size:12px;font-weight:normal;font-family:'Liberation Sans',sans-serif;letter-spacing:0.333px;right:105.87px;">30.1 Mb/s</div>
<div style="position:absolute;top:796.12px;line-height:12px;white-space:pre;color:#ccccdc;font-size:12px;font-weight:normal;font-family:'Liberation Sans',sans-serif;letter-spacing:0.333px;right:33.97px;">5.42 Mb/s</div>
<div style="position:absolute;top:820.12px;line-height:12px;white-space:pre;color:#ccccdc;font-size:12px;font-weight:normal;font-family:'Liberation Sans',sans-serif;letter-spacing:0.071px;left:1376.2px;">eth1:In</div>
<div style="position:absolute;top:820.12px;line-height:12px;white-space:pre;color:#ccccdc;font-size:12px;font-weight:normal;font-family:'Liberation Sans',sans-serif;letter-spacing:0.397px;right:105.80px;">0 b/s</div>
<div style="position:absolute;top:820.12px;line-height:12px;white-space:pre;color:#ccccdc;font-size:12px;font-weight:normal;font-family:'Liberation Sans',sans-serif;letter-spacing:0.397px;right:33.90px;">0 b/s</div>
<div style="position:absolute;top:844.12px;line-height:12px;white-space:pre;color:#ccccdc;font-size:12px;font-weight:normal;font-family:'Liberation Sans',sans-serif;letter-spacing:0.071px;left:1376.2px;">eth2:In</div>
<div style="position:absolute;top:844.12px;line-height:12px;white-space:pre;color:#ccccdc;font-size:12px;font-weight:normal;font-family:'Liberation Sans',sans-serif;letter-spacing:0.397px;right:105.80px;">0 b/s</div>
<div style="position:absolute;top:844.12px;line-height:12px;white-space:pre;color:#ccccdc;font-size:12px;font-weight:normal;font-family:'Liberation Sans',sans-serif;letter-spacing:0.397px;right:33.90px;">0 b/s</div>
<div style="position:absolute;top:867.12px;line-height:12px;white-space:pre;color:#ccccdc;font-size:12px;font-weight:normal;font-family:'Liberation Sans',sans-serif;letter-spacing:0.114px;left:1376.2px;">eth3:In</div>
<div style="position:absolute;top:867.12px;line-height:12px;white-space:pre;color:#ccccdc;font-size:12px;font-weight:normal;font-family:'Liberation Sans',sans-serif;letter-spacing:0.333px;right:105.87px;">16.9 Mb/s</div>
<div style="position:absolute;top:867.12px;line-height:12px;white-space:pre;color:#ccccdc;font-size:12px;font-weight:normal;font-family:'Liberation Sans',sans-serif;letter-spacing:0.333px;right:33.97px;">10.4 Mb/s</div>
<div style="position:absolute;top:891.12px;line-height:12px;white-space:pre;color:#ccccdc;font-size:12px;font-weight:normal;font-family:'Liberation Sans',sans-serif;letter-spacing:0.071px;left:1376.2px;">eth4:In</div>
<div style="position:absolute;top:891.12px;line-height:12px;white-space:pre;color:#ccccdc;font-size:12px;font-weight:normal;font-family:'Liberation Sans',sans-serif;letter-spacing:0.397px;right:105.80px;">0 b/s</div>
<div style="position:absolute;top:891.12px;line-height:12px;white-space:pre;color:#ccccdc;font-size:12px;font-weight:normal;font-family:'Liberation Sans',sans-serif;letter-spacing:0.397px;right:33.90px;">0 b/s</div>
<div style="position:absolute;top:915.12px;line-height:12px;white-space:pre;color:#ccccdc;font-size:12px;font-weight:normal;font-family:'Liberation Sans',sans-serif;letter-spacing:0.194px;left:1376.2px;">switch0:In</div>
<div style="position:absolute;top:915.12px;line-height:12px;white-space:pre;color:#ccccdc;font-size:12px;font-weight:normal;font-family:'Liberation Sans',sans-serif;letter-spacing:0.333px;right:105.87px;">4.31 Mb/s</div>
<div style="position:absolute;top:915.12px;line-height:12px;white-space:pre;color:#ccccdc;font-size:12px;font-weight:normal;font-family:'Liberation Sans',sans-serif;letter-spacing:0.333px;right:33.97px;">4.18 Mb/s</div>
<div style="position:absolute;top:939.12px;line-height:12px;white-space:pre;color:#ccccdc;font-size:12px;font-weight:normal;font-family:'Liberation Sans',sans-serif;letter-spacing:0.184px;left:1376.2px;">switch0.201:In</div>
<div style="position:absolute;top:939.12px;line-height:12px;white-space:pre;color:#ccccdc;font-size:12px;font-weight:normal;font-family:'Liberation Sans',sans-serif;letter-spacing:0.333px;right:105.87px;">1.30 Mb/s</div>
<div style="position:absolute;top:939.12px;line-height:12px;white-space:pre;color:#ccccdc;font-size:12px;font-weight:normal;font-family:'Liberation Sans',sans-serif;letter-spacing:0.333px;right:33.97px;">1.15 Mb/s</div>
<div style="position:absolute;top:963.12px;line-height:12px;white-space:pre;color:#ccccdc;font-size:12px;font-weight:normal;font-family:'Liberation Sans',sans-serif;letter-spacing:0.120px;left:1376.2px;">imq0:In</div>
<div style="position:absolute;top:963.12px;line-height:12px;white-space:pre;color:#ccccdc;font-size:12px;font-weight:normal;font-family:'Liberation Sans',sans-serif;letter-spacing:0.397px;right:105.80px;">0 b/s</div>
<div style="position:absolute;top:963.12px;line-height:12px;white-space:pre;color:#ccccdc;font-size:12px;font-weight:normal;font-family:'Liberation Sans',sans-serif;letter-spacing:0.397px;right:33.90px;">0 b/s</div>
<div style="position:absolute;top:1068.12px;line-height:12px;white-space:pre;color:#ccccdc;font-size:12px;font-weight:normal;font-family:'Liberation Sans',sans-serif;letter-spacing:0.331px;right:1583.67px;">5 kp/s</div>
<div style="position:absolute;top:1123.62px;line-height:12px;white-space:pre;color:#ccccdc;font-size:12px;font-weight:normal;font-family:'Liberation Sans',sans-serif;letter-spacing:0.397px;right:1583.60px;">0 p/s</div>
<div style="position:absolute;top:1179.12px;line-height:12px;white-space:pre;color:#ccccdc;font-size:12px;font-weight:normal;font-family:'Liberation Sans',sans-serif;letter-spacing:0.212px;right:1583.79px;">-5 kp/s</div>
<div style="position:absolute;top:1228.12px;line-height:12px;white-space:pre;color:#ccccdc;font-size:12px;font-weight:normal;font-family:'Liberation Sans',sans-serif;left:81.50px;transform:translateX(-50%);">10:40</div>
<div style="position:absolute;top:1228.12px;line-height:12px;white-space:pre;color:#ccccdc;font-size:12px;font-weight:normal;font-family:'Liberation Sans',sans-serif;left:184.80px;transform:translateX(-50%);">10:45</div>
<div style="position:absolute;top:1228.12px;line-height:12px;white-space:pre;color:#ccccdc;font-size:12px;font-weight:normal;font-family:'Liberation Sans',sans-serif;left:288.10px;transform:translateX(-50%);">10:50</div>
<div style="position:absolute;top:1228.12px;line-height:12px;white-space:pre;color:#ccccdc;font-size:12px;font-weight:normal;font-family:'Liberation Sans',sans-serif;left:391.40px;transform:translateX(-50%);">10:55</div>
<div style="position:absolute;top:1228.12px;line-height:12px;white-space:pre;color:#ccccdc;font-size:12px;font-weight:normal;font-family:'Liberation Sans',sans-serif;left:494.70px;transform:translateX(-50%);">11:00</div>
<div style="position:absolute;top:1228.12px;line-height:12px;white-space:pre;color:#ccccdc;font-size:12px;font-weight:normal;font-family:'Liberation Sans',sans-serif;left:598.00px;transform:translateX(-50%);">11:05</div>
<div style="position:absolute;top:1228.12px;line-height:12px;white-space:pre;color:#ccccdc;font-size:12px;font-weight:normal;font-family:'Liberation Sans',sans-serif;left:701.30px;transform:translateX(-50%);">11:10</div>
<div style="position:absolute;top:1228.12px;line-height:12px;white-space:pre;color:#ccccdc;font-size:12px;font-weight:normal;font-family:'Liberation Sans',sans-serif;left:804.60px;transform:translateX(-50%);">11:15</div>
<div style="position:absolute;top:1228.12px;line-height:12px;white-space:pre;color:#ccccdc;font-size:12px;font-weight:normal;font-family:'Liberation Sans',sans-serif;left:907.90px;transform:translateX(-50%);">11:20</div>
<div style="position:absolute;top:1228.12px;line-height:12px;white-space:pre;color:#ccccdc;font-size:12px;font-weight:normal;font-family:'Liberation Sans',sans-serif;left:1011.20px;transform:translateX(-50%);">11:25</div>
<div style="position:absolute;top:1228.12px;line-height:12px;white-space:pre;color:#ccccdc;font-size:12px;font-weight:normal;font-family:'Liberation Sans',sans-serif;left:1114.50px;transform:translateX(-50%);">11:30</div>
<div style="position:absolute;top:1228.12px;line-height:12px;white-space:pre;color:#ccccdc;font-size:12px;font-weight:normal;font-family:'Liberation Sans',sans-serif;left:1217.80px;transform:translateX(-50%);">11:35</div>
<div style="position:absolute;top:1038.12px;line-height:12px;white-space:pre;color:#6e9fff;font-size:12px;font-weight:normal;font-family:'Liberation Sans',sans-serif;letter-spacing:0.276px;right:102.72px;">Max</div>
<div style="position:absolute;top:1038.12px;line-height:12px;white-space:pre;color:#6e9fff;font-size:12px;font-weight:normal;font-family:'Liberation Sans',sans-serif;letter-spacing:0.203px;right:33.90px;">Last</div>
<div style="position:absolute;top:1062.12px;line-height:12px;white-space:pre;color:#ccccdc;font-size:12px;font-weight:normal;font-family:'Liberation Sans',sans-serif;letter-spacing:0.096px;left:1345.2px;">eth0:Bcast:In</div>
<div style="position:absolute;top:1062.12px;line-height:12px;white-space:pre;color:#ccccdc;font-size:12px;font-weight:normal;font-family:'Liberation Sans',sans-serif;letter-spacing:0.397px;right:102.60px;">0 p/s</div>
<div style="position:absolute;top:1062.12px;line-height:12px;white-space:pre;color:#ccccdc;font-size:12px;font-weight:normal;font-family:'Liberation Sans',sans-serif;letter-spacing:0.397px;right:33.70px;">0 p/s</div>
<div style="position:absolute;top:1086.12px;line-height:12px;white-space:pre;color:#ccccdc;font-size:12px;font-weight:normal;font-family:'Liberation Sans',sans-serif;letter-spacing:0.096px;left:1345.2px;">eth1:Bcast:In</div>
<div style="position:absolute;top:1086.12px;line-height:12px;white-space:pre;color:#ccccdc;font-size:12px;font-weight:normal;font-family:'Liberation Sans',sans-serif;letter-spacing:0.397px;right:102.60px;">0 p/s</div>
<div style="position:absolute;top:1086.12px;line-height:12px;white-space:pre;color:#ccccdc;font-size:12px;font-weight:normal;font-family:'Liberation Sans',sans-serif;letter-spacing:0.397px;right:33.70px;">0 p/s</div>
<div style="position:absolute;top:1110.12px;line-height:12px;white-space:pre;color:#ccccdc;font-size:12px;font-weight:normal;font-family:'Liberation Sans',sans-serif;letter-spacing:0.096px;left:1345.2px;">eth2:Bcast:In</div>
<div style="position:absolute;top:1110.12px;line-height:12px;white-space:pre;color:#ccccdc;font-size:12px;font-weight:normal;font-family:'Liberation Sans',sans-serif;letter-spacing:0.397px;right:102.60px;">0 p/s</div>
<div style="position:absolute;top:1110.12px;line-height:12px;white-space:pre;color:#ccccdc;font-size:12px;font-weight:normal;font-family:'Liberation Sans',sans-serif;letter-spacing:0.397px;right:33.70px;">0 p/s</div>
<div style="position:absolute;top:1133.12px;line-height:12px;white-space:pre;color:#ccccdc;font-size:12px;font-weight:normal;font-family:'Liberation Sans',sans-serif;letter-spacing:0.096px;left:1345.2px;">eth3:Bcast:In</div>
<div style="position:absolute;top:1133.12px;line-height:12px;white-space:pre;color:#ccccdc;font-size:12px;font-weight:normal;font-family:'Liberation Sans',sans-serif;letter-spacing:0.397px;right:102.60px;">0 p/s</div>
<div style="position:absolute;top:1133.12px;line-height:12px;white-space:pre;color:#ccccdc;font-size:12px;font-weight:normal;font-family:'Liberation Sans',sans-serif;letter-spacing:0.397px;right:33.70px;">0 p/s</div>
<div style="position:absolute;top:1157.12px;line-height:12px;white-space:pre;color:#ccccdc;font-size:12px;font-weight:normal;font-family:'Liberation Sans',sans-serif;letter-spacing:0.096px;left:1345.2px;">eth4:Bcast:In</div>
<div style="position:absolute;top:1157.12px;line-height:12px;white-space:pre;color:#ccccdc;font-size:12px;font-weight:normal;font-family:'Liberation Sans',sans-serif;letter-spacing:0.397px;right:102.60px;">0 p/s</div>
<div style="position:absolute;top:1157.12px;line-height:12px;white-space:pre;color:#ccccdc;font-size:12px;font-weight:normal;font-family:'Liberation Sans',sans-serif;letter-spacing:0.397px;right:33.70px;">0 p/s</div>
<div style="position:absolute;top:1181.12px;line-height:12px;white-space:pre;color:#ccccdc;font-size:12px;font-weight:normal;font-family:'Liberation Sans',sans-serif;letter-spacing:0.206px;left:1345.2px;">switch0:Bcast:In</div>
<div style="position:absolute;top:1181.12px;line-height:12px;white-space:pre;color:#ccccdc;font-size:12px;font-weight:normal;font-family:'Liberation Sans',sans-serif;letter-spacing:0.397px;right:102.60px;">0 p/s</div>
<div style="position:absolute;top:1181.12px;line-height:12px;white-space:pre;color:#ccccdc;font-size:12px;font-weight:normal;font-family:'Liberation Sans',sans-serif;letter-spacing:0.397px;right:33.70px;">0 p/s</div>
<div style="position:absolute;top:1205.12px;line-height:12px;white-space:pre;color:#ccccdc;font-size:12px;font-weight:normal;font-family:'Liberation Sans',sans-serif;letter-spacing:0.172px;left:1345.2px;">switch0.201:Bcast:In</div>
<div style="position:absolute;top:1205.12px;line-height:12px;white-space:pre;color:#ccccdc;font-size:12px;font-weight:normal;font-family:'Liberation Sans',sans-serif;letter-spacing:0.397px;right:102.60px;">0 p/s</div>
<div style="position:absolute;top:1205.12px;line-height:12px;white-space:pre;color:#ccccdc;font-size:12px;font-weight:normal;font-family:'Liberation Sans',sans-serif;letter-spacing:0.397px;right:33.70px;">0 p/s</div>
<div style="position:absolute;top:1229.12px;line-height:12px;white-space:pre;color:#ccccdc;font-size:12px;font-weight:normal;font-family:'Liberation Sans',sans-serif;letter-spacing:0.138px;left:1345.2px;">imq0:Bcast:In</div>
<div style="position:absolute;top:1229.12px;line-height:12px;white-space:pre;color:#ccccdc;font-size:12px;font-weight:normal;font-family:'Liberation Sans',sans-serif;letter-spacing:0.397px;right:102.60px;">0 p/s</div>
<div style="position:absolute;top:1229.12px;line-height:12px;white-space:pre;color:#ccccdc;font-size:12px;font-weight:normal;font-family:'Liberation Sans',sans-serif;letter-spacing:0.397px;right:33.70px;">0 p/s</div>
</div>
<div style="position:absolute;top:15.18px;line-height:18px;white-space:pre;color:#ccccdc;font-size:18px;font-weight:normal;font-family:'Liberation Sans',sans-serif;letter-spacing:0.001px;left:39.7px;">Integration - Ubiquiti EdgeRouter</div>
<div style="position:absolute;top:15.18px;line-height:18px;white-space:pre;color:#ccccdc;font-size:18px;font-weight:normal;font-family:'Liberation Sans',sans-serif;letter-spacing:-0.581px;left:310.5px;">/ UBNT EdgeRouter X Overview</div>
<div style="position:absolute;top:16.54px;line-height:14px;white-space:pre;color:#b4b6c8;font-size:14px;font-weight:normal;font-family:'Liberation Sans',sans-serif;letter-spacing:0.176px;-webkit-text-stroke:0.6px;left:1363.2px;">Last 1 hour</div>
</body></html>
